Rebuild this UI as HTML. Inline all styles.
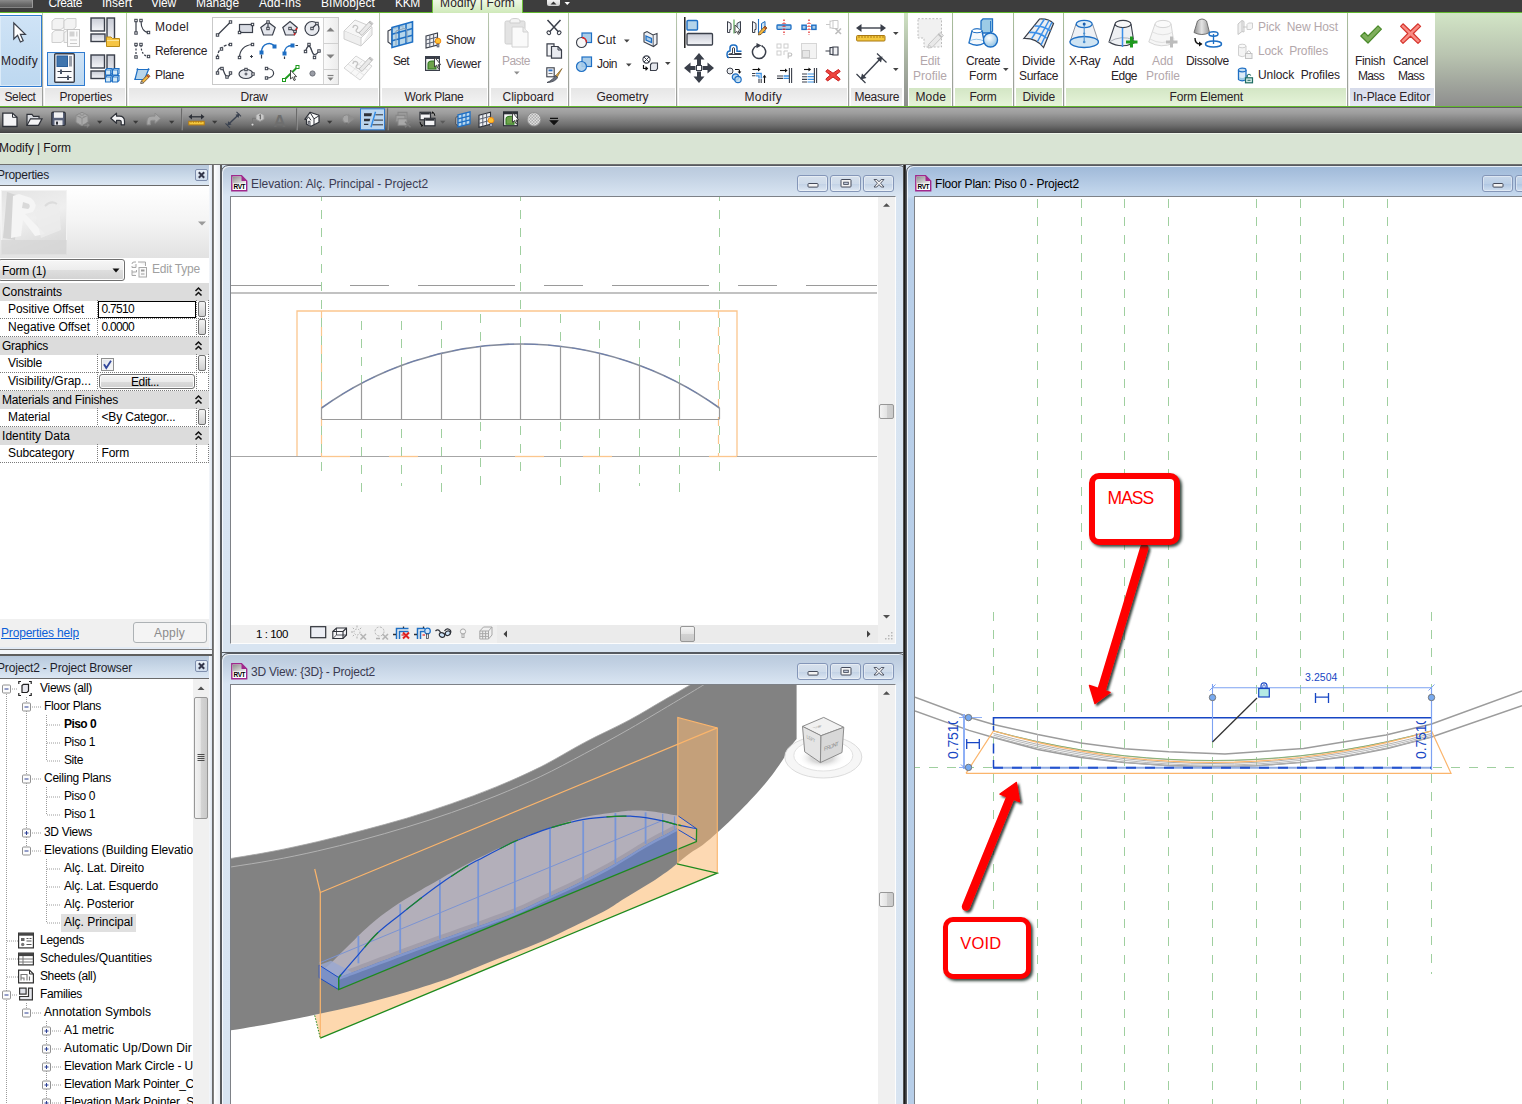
<!DOCTYPE html>
<html><head><meta charset="utf-8"><title>Autodesk Revit - Project2</title><style>
html,body{margin:0;padding:0;background:#fff;}
body{width:1522px;height:1104px;overflow:hidden;position:relative;font-family:"Liberation Sans",sans-serif;}
#app{position:absolute;left:0;top:0;width:1522px;height:1104px;overflow:hidden;}
.t{position:absolute;white-space:pre;}
svg{overflow:visible;display:block;}
</style></head>
<body><div id="app">
<!-- structure -->
<div style="position:absolute;left:0px;top:0px;width:1522px;height:12px;background:#3d3d3d;"></div>
<div style="position:absolute;left:0px;top:0px;width:33px;height:8px;background:linear-gradient(#8b8b8b,#6a6a6a 60%,#5c5c5c);border-right:1px solid #9a9a9a;border-bottom:1px solid #858585;box-sizing:border-box;"></div>
<div style="position:absolute;left:432px;top:0px;width:91px;height:13px;background:linear-gradient(#eef8e4,#cfe9b9);border-left:1px solid #6fc23a;border-right:1px solid #6fc23a;box-sizing:border-box;"></div>
<span class="t" style="left:48.5px;top:-5.37px;font-size:12px;line-height:16px;color:#ffffff;letter-spacing:-0.419px;">Create</span>
<span class="t" style="left:102.0px;top:-5.37px;font-size:12px;line-height:16px;color:#ffffff;">Insert</span>
<span class="t" style="left:151.0px;top:-5.37px;font-size:12px;line-height:16px;color:#ffffff;letter-spacing:-0.198px;">View</span>
<span class="t" style="left:196.0px;top:-5.37px;font-size:12px;line-height:16px;color:#ffffff;letter-spacing:-0.060px;">Manage</span>
<span class="t" style="left:259.0px;top:-5.37px;font-size:12px;line-height:16px;color:#ffffff;letter-spacing:0.092px;">Add-Ins</span>
<span class="t" style="left:321.0px;top:-5.37px;font-size:12px;line-height:16px;color:#ffffff;letter-spacing:0.072px;">BIMobject</span>
<span class="t" style="left:395.0px;top:-5.37px;font-size:12px;line-height:16px;color:#ffffff;letter-spacing:-0.335px;">KKM</span>
<span class="t" style="left:440.0px;top:-5.37px;font-size:12px;line-height:16px;color:#2a2226;letter-spacing:0.145px;">Modify | Form</span>
<div style="position:absolute;left:547px;top:0px;width:13px;height:6px;background:linear-gradient(#f4f4f4,#cfcfcf);border-radius:0 0 2px 2px;"></div>
<svg style="position:absolute;left:547px;top:0px;" width="30" height="10" viewBox="0 0 30 10"><path d="M3.5 4.5 L6.5 1.5 L9.5 4.5Z" fill="#333"/><path d="M17.5 2 L23 2 L20.25 5Z" fill="#fff"/></svg>
<div style="position:absolute;left:0px;top:12px;width:432px;height:1px;background:#62b72f;"></div>
<div style="position:absolute;left:523px;top:12px;width:999px;height:1px;background:#62b72f;"></div>
<div style="position:absolute;left:0px;top:13px;width:1435px;height:93px;background:#ffffff;"></div>
<div style="position:absolute;left:1435px;top:13px;width:87px;height:93px;background:linear-gradient(#d2e5c6,#b9c4b0 45%,#8e8e8e);"></div>
<div style="position:absolute;left:0px;top:106px;width:1522px;height:1px;background:#62b72f;"></div>
<div style="position:absolute;left:0px;top:88px;width:41.5px;height:18px;background:linear-gradient(#e6e6e6,#f4f4f4);"></div>
<div style="position:absolute;left:45px;top:88px;width:80.0px;height:18px;background:linear-gradient(#e6e6e6,#f4f4f4);"></div>
<div style="position:absolute;left:128.5px;top:88px;width:249.5px;height:18px;background:linear-gradient(#e6e6e6,#f4f4f4);"></div>
<div style="position:absolute;left:381.5px;top:88px;width:105.5px;height:18px;background:linear-gradient(#e6e6e6,#f4f4f4);"></div>
<div style="position:absolute;left:490.5px;top:88px;width:76.5px;height:18px;background:linear-gradient(#e6e6e6,#f4f4f4);"></div>
<div style="position:absolute;left:570.5px;top:88px;width:104.5px;height:18px;background:linear-gradient(#e6e6e6,#f4f4f4);"></div>
<div style="position:absolute;left:678.5px;top:88px;width:168.5px;height:18px;background:linear-gradient(#e6e6e6,#f4f4f4);"></div>
<div style="position:absolute;left:850.5px;top:88px;width:51.0px;height:18px;background:linear-gradient(#e6e6e6,#f4f4f4);"></div>
<div style="position:absolute;left:42px;top:13px;width:1px;height:93px;background:linear-gradient(#b8c9ad,#9a9a9a);"></div>
<div style="position:absolute;left:43px;top:13px;width:1px;height:93px;background:linear-gradient(#ffffff,#e8e8e8);"></div>
<div style="position:absolute;left:126px;top:13px;width:1px;height:93px;background:linear-gradient(#b8c9ad,#9a9a9a);"></div>
<div style="position:absolute;left:127px;top:13px;width:1px;height:93px;background:linear-gradient(#ffffff,#e8e8e8);"></div>
<div style="position:absolute;left:379px;top:13px;width:1px;height:93px;background:linear-gradient(#b8c9ad,#9a9a9a);"></div>
<div style="position:absolute;left:380px;top:13px;width:1px;height:93px;background:linear-gradient(#ffffff,#e8e8e8);"></div>
<div style="position:absolute;left:488px;top:13px;width:1px;height:93px;background:linear-gradient(#b8c9ad,#9a9a9a);"></div>
<div style="position:absolute;left:489px;top:13px;width:1px;height:93px;background:linear-gradient(#ffffff,#e8e8e8);"></div>
<div style="position:absolute;left:568px;top:13px;width:1px;height:93px;background:linear-gradient(#b8c9ad,#9a9a9a);"></div>
<div style="position:absolute;left:569px;top:13px;width:1px;height:93px;background:linear-gradient(#ffffff,#e8e8e8);"></div>
<div style="position:absolute;left:676px;top:13px;width:1px;height:93px;background:linear-gradient(#b8c9ad,#9a9a9a);"></div>
<div style="position:absolute;left:677px;top:13px;width:1px;height:93px;background:linear-gradient(#ffffff,#e8e8e8);"></div>
<div style="position:absolute;left:848px;top:13px;width:1px;height:93px;background:linear-gradient(#b8c9ad,#9a9a9a);"></div>
<div style="position:absolute;left:849px;top:13px;width:1px;height:93px;background:linear-gradient(#ffffff,#e8e8e8);"></div>
<div style="position:absolute;left:904px;top:13px;width:4px;height:93px;background:linear-gradient(#cfe2c3,#a9b3a2 50%,#8d8d8d);"></div>
<div style="position:absolute;left:909px;top:88px;width:42.0px;height:18px;background:linear-gradient(#d3e6c5,#e6f4d9);"></div>
<div style="position:absolute;left:954.5px;top:88px;width:57.5px;height:18px;background:linear-gradient(#d3e6c5,#e6f4d9);"></div>
<div style="position:absolute;left:1015.5px;top:88px;width:46.5px;height:18px;background:linear-gradient(#d3e6c5,#e6f4d9);"></div>
<div style="position:absolute;left:1065.5px;top:88px;width:280.5px;height:18px;background:linear-gradient(#d3e6c5,#e6f4d9);"></div>
<div style="position:absolute;left:1349.5px;top:88px;width:84.5px;height:18px;background:linear-gradient(#d6dbea,#e8ebf5);"></div>
<div style="position:absolute;left:952px;top:13px;width:1px;height:93px;background:linear-gradient(#a9bf9b,#9a9a9a);"></div>
<div style="position:absolute;left:953px;top:13px;width:1px;height:93px;background:linear-gradient(#ffffff,#e8e8e8);"></div>
<div style="position:absolute;left:1013px;top:13px;width:1px;height:93px;background:linear-gradient(#a9bf9b,#9a9a9a);"></div>
<div style="position:absolute;left:1014px;top:13px;width:1px;height:93px;background:linear-gradient(#ffffff,#e8e8e8);"></div>
<div style="position:absolute;left:1063px;top:13px;width:1px;height:93px;background:linear-gradient(#a9bf9b,#9a9a9a);"></div>
<div style="position:absolute;left:1064px;top:13px;width:1px;height:93px;background:linear-gradient(#ffffff,#e8e8e8);"></div>
<div style="position:absolute;left:1347px;top:13px;width:1px;height:93px;background:linear-gradient(#a9bf9b,#9a9a9a);"></div>
<div style="position:absolute;left:1348px;top:13px;width:1px;height:93px;background:linear-gradient(#ffffff,#e8e8e8);"></div>
<span class="t" style="left:4.5px;top:88.53px;font-size:12px;line-height:16px;color:#2a2226;letter-spacing:-0.392px;">Select</span>
<span class="t" style="left:59.5px;top:88.53px;font-size:12px;line-height:16px;color:#2a2226;letter-spacing:-0.219px;">Properties</span>
<span class="t" style="left:240.5px;top:88.53px;font-size:12px;line-height:16px;color:#2a2226;letter-spacing:-0.250px;">Draw</span>
<span class="t" style="left:404.5px;top:88.53px;font-size:12px;line-height:16px;color:#2a2226;letter-spacing:-0.280px;">Work Plane</span>
<span class="t" style="left:502.5px;top:88.53px;font-size:12px;line-height:16px;color:#2a2226;letter-spacing:0.016px;">Clipboard</span>
<span class="t" style="left:596.5px;top:88.53px;font-size:12px;line-height:16px;color:#2a2226;letter-spacing:-0.085px;">Geometry</span>
<span class="t" style="left:744.5px;top:88.53px;font-size:12px;line-height:16px;color:#2a2226;letter-spacing:0.360px;">Modify</span>
<span class="t" style="left:854.5px;top:88.53px;font-size:12px;line-height:16px;color:#2a2226;letter-spacing:-0.312px;">Measure</span>
<span class="t" style="left:915.5px;top:88.53px;font-size:12px;line-height:16px;color:#2a2226;letter-spacing:0.121px;">Mode</span>
<span class="t" style="left:969.5px;top:88.53px;font-size:12px;line-height:16px;color:#2a2226;letter-spacing:-0.248px;">Form</span>
<span class="t" style="left:1022.5px;top:88.53px;font-size:12px;line-height:16px;color:#2a2226;letter-spacing:-0.141px;">Divide</span>
<span class="t" style="left:1169.5px;top:88.53px;font-size:12px;line-height:16px;color:#2a2226;letter-spacing:-0.154px;">Form Element</span>
<span class="t" style="left:1353.0px;top:88.53px;font-size:12px;line-height:16px;color:#2a2226;letter-spacing:-0.113px;">In-Place Editor</span>
<div style="position:absolute;left:0px;top:107px;width:1522px;height:26px;background:linear-gradient(#5f5f5f 0,#5f5f5f 1px,#a9a9a9 1px,#9c9c9c 25%,#6e6e6e 70%,#4a4a4a 96%,#3c3c3c);"></div>
<div style="position:absolute;left:0px;top:133px;width:1522px;height:31px;background:#d9e4d4;border-top:1px solid #eef4ea;box-sizing:border-box;"></div>
<span class="t" style="left:-1.0px;top:140.03px;font-size:12px;line-height:16px;color:#1a1418;letter-spacing:-0.086px;">Modify | Form</span>
<div style="position:absolute;left:0px;top:164px;width:1522px;height:1px;background:#6f6f6f;"></div>
<div style="position:absolute;left:0px;top:165px;width:1522px;height:939px;background:#d7e3f0;"></div>
<!-- ribbon -->
<div style="position:absolute;left:0px;top:15px;width:42px;height:72px;background:linear-gradient(#cfe3f6,#bdd8f0);border:1px solid #2f7bd0;border-left:none;box-sizing:border-box;box-shadow:inset 0 0 0 1px #dcebf8;"></div>
<span class="t" style="left:1.0px;top:53.03px;font-size:12px;line-height:16px;color:#2a2226;letter-spacing:0.276px;">Modify</span>
<div style="position:absolute;left:47px;top:52px;width:38px;height:34px;background:linear-gradient(#cfe3f6,#bdd8f0);border:1px solid #2f7bd0;box-sizing:border-box;"></div>
<span class="t" style="left:155.0px;top:19.03px;font-size:12px;line-height:16px;color:#2a2226;letter-spacing:0.264px;">Model</span>
<span class="t" style="left:155.0px;top:43.03px;font-size:12px;line-height:16px;color:#2a2226;letter-spacing:-0.373px;">Reference</span>
<span class="t" style="left:155.0px;top:67.03px;font-size:12px;line-height:16px;color:#2a2226;letter-spacing:-0.338px;">Plane</span>
<div style="position:absolute;left:212px;top:17px;width:127px;height:68px;border:1px solid #c9c9c9;box-sizing:border-box;background:#fff;"></div>
<div style="position:absolute;left:323px;top:18px;width:15px;height:66px;background:linear-gradient(90deg,#fafafa,#ececec);border-left:1px solid #d4d4d4;box-sizing:border-box;"></div>
<div style="position:absolute;left:324px;top:43px;width:14px;height:1px;background:#d0d0d0;"></div>
<div style="position:absolute;left:324px;top:69px;width:14px;height:1px;background:#d0d0d0;"></div>
<span class="t" style="left:393.0px;top:53.03px;font-size:12px;line-height:16px;color:#2a2226;letter-spacing:-0.670px;">Set</span>
<span class="t" style="left:446.0px;top:31.53px;font-size:12px;line-height:16px;color:#2a2226;letter-spacing:-0.254px;">Show</span>
<span class="t" style="left:446.0px;top:55.53px;font-size:12px;line-height:16px;color:#2a2226;letter-spacing:-0.244px;">Viewer</span>
<span class="t" style="left:502.0px;top:53.03px;font-size:12px;line-height:16px;color:#b3a7ab;letter-spacing:-0.537px;">Paste</span>
<span class="t" style="left:597.0px;top:31.53px;font-size:12px;line-height:16px;color:#2a2226;letter-spacing:0.109px;">Cut</span>
<span class="t" style="left:597.0px;top:55.53px;font-size:12px;line-height:16px;color:#2a2226;letter-spacing:-0.503px;">Join</span>
<span class="t" style="left:920.0px;top:53.03px;font-size:12px;line-height:16px;color:#b3a7ab;letter-spacing:-0.169px;">Edit</span>
<span class="t" style="left:913.0px;top:68.03px;font-size:12px;line-height:16px;color:#b3a7ab;">Profile</span>
<span class="t" style="left:966.0px;top:53.03px;font-size:12px;line-height:16px;color:#2a2226;letter-spacing:-0.336px;">Create</span>
<span class="t" style="left:969.0px;top:68.03px;font-size:12px;line-height:16px;color:#2a2226;">Form</span>
<span class="t" style="left:1022.0px;top:53.03px;font-size:12px;line-height:16px;color:#2a2226;letter-spacing:-0.057px;">Divide</span>
<span class="t" style="left:1019.0px;top:68.03px;font-size:12px;line-height:16px;color:#2a2226;letter-spacing:-0.336px;">Surface</span>
<span class="t" style="left:1069.0px;top:53.03px;font-size:12px;line-height:16px;color:#2a2226;letter-spacing:-0.468px;">X-Ray</span>
<span class="t" style="left:1113.0px;top:53.03px;font-size:12px;line-height:16px;color:#2a2226;letter-spacing:-0.117px;">Add</span>
<span class="t" style="left:1111.0px;top:68.03px;font-size:12px;line-height:16px;color:#2a2226;letter-spacing:-0.506px;">Edge</span>
<span class="t" style="left:1152.0px;top:53.03px;font-size:12px;line-height:16px;color:#b3a7ab;letter-spacing:-0.117px;">Add</span>
<span class="t" style="left:1146.0px;top:68.03px;font-size:12px;line-height:16px;color:#b3a7ab;">Profile</span>
<span class="t" style="left:1186.0px;top:53.03px;font-size:12px;line-height:16px;color:#2a2226;letter-spacing:-0.293px;">Dissolve</span>
<span class="t" style="left:1258.0px;top:19.03px;font-size:12px;line-height:16px;color:#b3a7ab;letter-spacing:-0.096px;">Pick  New Host</span>
<span class="t" style="left:1258.0px;top:43.03px;font-size:12px;line-height:16px;color:#b3a7ab;letter-spacing:-0.145px;">Lock  Profiles</span>
<span class="t" style="left:1258.0px;top:67.03px;font-size:12px;line-height:16px;color:#2a2226;letter-spacing:-0.085px;">Unlock  Profiles</span>
<span class="t" style="left:1355.0px;top:53.03px;font-size:12px;line-height:16px;color:#2a2226;letter-spacing:-0.335px;">Finish</span>
<span class="t" style="left:1358.0px;top:68.03px;font-size:12px;line-height:16px;color:#2a2226;letter-spacing:-0.667px;">Mass</span>
<span class="t" style="left:1393.0px;top:53.03px;font-size:12px;line-height:16px;color:#2a2226;letter-spacing:-0.392px;">Cancel</span>
<span class="t" style="left:1398.0px;top:68.03px;font-size:12px;line-height:16px;color:#2a2226;letter-spacing:-0.667px;">Mass</span>
<svg style="position:absolute;left:0px;top:0px;" width="1522" height="107" viewBox="0 0 1522 107"><g transform="translate(13,22)"><path d="M0.8 1 L0.8 17 L4.6 13.4 L7.4 20 L10.2 18.8 L7.4 12.4 L12.4 12.4 Z" fill="#fff" stroke="#3a3f4a" stroke-width="1.2" stroke-linejoin="miter"/></g>
<g transform="translate(51,18)"><g fill="#f3f3f3" stroke="#cfcfcf" stroke-width="1">
<path d="M1 3 L4 0.5 L13 0.5 L13 9 L10 11.5 L1 11.5Z"/><path d="M13 3 L16 0.5 L25 0.5 L25 9 L22 11.5 L13 11.5Z"/>
<path d="M1 15 L4 12.5 L13 12.5 L13 22 L10 24.5 L1 24.5Z"/><path d="M13 15 L16 12.5 L22 12.5 L22 24.5 L13 24.5Z"/></g>
<rect x="16.5" y="11.5" width="12" height="17" fill="#fafafa" stroke="#c4c4c4"/><rect x="18.5" y="13.5" width="5" height="5" fill="#d2d2d2"/><rect x="25" y="13.5" width="1.5" height="5" fill="#d8d8d8"/>
<path d="M19 22 H26 M19 25.5 H26" stroke="#c9c9c9"/></g>
<g transform="translate(90,17)"><defs><linearGradient id="gg" x1="0" y1="0" x2="0" y2="1"><stop offset="0" stop-color="#c9ccd6"/><stop offset="1" stop-color="#f4f5f8"/></linearGradient></defs>
<rect x="1" y="1" width="13.5" height="13" fill="url(#gg)" stroke="#3a3f4a" stroke-width="1.4"/><rect x="17" y="1" width="7.5" height="24" fill="url(#gg)" stroke="#3a3f4a" stroke-width="1.4"/><rect x="1" y="17" width="14" height="7.5" fill="url(#gg)" stroke="#3a3f4a" stroke-width="1.4"/><path d="M16.5 20 H21 L22.5 21.5 H29.5 V29.5 H16.5Z" fill="#f6c544" stroke="#b98a16" stroke-width="1"/><path d="M17 23.5 H29" stroke="#fbe59a" stroke-width="1"/></g>
<g transform="translate(54,53)"><rect x="0.7" y="0.7" width="19.6" height="28.6" rx="1" fill="#fbfbfc" stroke="#3a3f4a" stroke-width="1.4"/>
<rect x="3" y="3" width="10.5" height="10.5" fill="#3f74ad" stroke="#2a5f9c"/><rect x="15" y="3" width="3" height="10.5" fill="#9aa0ab"/>
<path d="M3.5 18.5 H17.5 M3.5 24.5 H17.5" stroke="#3a3f4a" stroke-width="1"/><rect x="6" y="16.5" width="2" height="4.5" fill="#4a5568"/><rect x="13" y="22.5" width="2" height="4.5" fill="#4a5568"/></g>
<g transform="translate(90,54)"><defs><linearGradient id="gg2" x1="0" y1="0" x2="0" y2="1"><stop offset="0" stop-color="#c9ccd6"/><stop offset="1" stop-color="#f4f5f8"/></linearGradient></defs>
<rect x="1" y="1" width="13.5" height="13" fill="url(#gg2)" stroke="#3a3f4a" stroke-width="1.4"/><rect x="17" y="1" width="7.5" height="24" fill="url(#gg2)" stroke="#3a3f4a" stroke-width="1.4"/><rect x="1" y="17" width="14" height="7.5" fill="url(#gg2)" stroke="#3a3f4a" stroke-width="1.4"/><path d="M15.5 16.0 L17.0 14.5 H22.0 V19.5 L20.5 21.0 H15.5Z" fill="#d5ebf7" stroke="#1e6fc4" stroke-width="1.1"/><path d="M15.5 16.0 H20.5 V21.0 M20.5 16.0 L22.0 14.5" fill="none" stroke="#1e6fc4" stroke-width="0.8"/><path d="M22.5 16.0 L24.0 14.5 H29.0 V19.5 L27.5 21.0 H22.5Z" fill="#d5ebf7" stroke="#1e6fc4" stroke-width="1.1"/><path d="M22.5 16.0 H27.5 V21.0 M27.5 16.0 L29.0 14.5" fill="none" stroke="#1e6fc4" stroke-width="0.8"/><path d="M15.5 23.0 L17.0 21.5 H22.0 V26.5 L20.5 28.0 H15.5Z" fill="#d5ebf7" stroke="#1e6fc4" stroke-width="1.1"/><path d="M15.5 23.0 H20.5 V28.0 M20.5 23.0 L22.0 21.5" fill="none" stroke="#1e6fc4" stroke-width="0.8"/><path d="M22.5 23.0 L24.0 21.5 H29.0 V26.5 L27.5 28.0 H22.5Z" fill="#d5ebf7" stroke="#1e6fc4" stroke-width="1.1"/><path d="M22.5 23.0 H27.5 V28.0 M27.5 23.0 L29.0 21.5" fill="none" stroke="#1e6fc4" stroke-width="0.8"/></g>
<g transform="translate(134,19)"><path d="M2 2 V14 M7 2 C7 9 10 13.5 15 13.5" fill="none" stroke="#3a3f4a" stroke-width="1.2"/><rect x="0.8" y="0.30000000000000004" width="2.4" height="2.4" fill="#fff" stroke="#3a3f4a" stroke-width="1"/><rect x="0.8" y="12.8" width="2.4" height="2.4" fill="#fff" stroke="#3a3f4a" stroke-width="1"/><rect x="5.8" y="0.30000000000000004" width="2.4" height="2.4" fill="#fff" stroke="#3a3f4a" stroke-width="1"/><rect x="13.3" y="12.3" width="2.4" height="2.4" fill="#fff" stroke="#3a3f4a" stroke-width="1"/></g>
<g transform="translate(134,43)"><path d="M2 2 V14 M7 2 C7 9 10 13.5 15 13.5" fill="none" stroke="#3a3f4a" stroke-width="1.2" stroke-dasharray="2 1.5"/><rect x="0.8" y="0.30000000000000004" width="2.4" height="2.4" fill="#fff" stroke="#3a3f4a" stroke-width="1"/><rect x="0.8" y="12.8" width="2.4" height="2.4" fill="#fff" stroke="#3a3f4a" stroke-width="1"/><rect x="5.8" y="0.30000000000000004" width="2.4" height="2.4" fill="#fff" stroke="#3a3f4a" stroke-width="1"/><rect x="13.3" y="12.3" width="2.4" height="2.4" fill="#fff" stroke="#3a3f4a" stroke-width="1"/></g>
<g transform="translate(134,67)"><path d="M3.5 2.5 H14.5 L10.5 12.5 H1Z" fill="#b8d5ea" stroke="#1e6fc4" stroke-width="1.2"/><path d="M2 2.5 l1.5-1.5 l1.5 1.5z M13 2.5 l1.5-1.5 l1.5 1.5z M0 12.5 l1.2-1.5 l1 1.5z" fill="#1e6fc4"/><path d="M7.5 14 L14 7.2 L16 9.2 L9.5 15.8 L6.8 16.4Z" fill="#f4b73f" stroke="#6b4a1f" stroke-width="0.8"/><path d="M13 8.2 L15 10.2" stroke="#b0452a" stroke-width="1.4"/><path d="M7.5 14 L9.5 15.8 L6.8 16.4Z" fill="#fff" stroke="#333" stroke-width="0.6"/></g>
<path d="M326.5 31.5 L330.5 27.5 L334.5 31.5Z M326.5 54.5 L334.5 54.5 L330.5 58.5Z M327.5 77.5 L333.5 77.5 L330.5 80.8Z" fill="#808080"/><path d="M327.5 75.5 H333.5" stroke="#808080" stroke-width="1.2"/>
<g transform="translate(216,20)"><path d="M1.5 15 L14.5 2" fill="none" stroke="#3a3f4a" stroke-width="1.2" /><rect x="0.30000000000000004" y="13.8" width="2.4" height="2.4" fill="#fff" stroke="#3a3f4a" stroke-width="1"/><rect x="13.3" y="0.8" width="2.4" height="2.4" fill="#fff" stroke="#3a3f4a" stroke-width="1"/></g>
<g transform="translate(238,20)"><rect x="1.5" y="4.5" width="13" height="8" fill="#d9dce4" stroke="#3a3f4a" stroke-width="1.2"/><rect x="0.30000000000000004" y="11.3" width="2.4" height="2.4" fill="#fff" stroke="#3a3f4a" stroke-width="1"/><rect x="13.3" y="3.3" width="2.4" height="2.4" fill="#fff" stroke="#3a3f4a" stroke-width="1"/></g>
<g transform="translate(260,20)"><path d="M8 2 L15.2 7.5 L12.5 15 H3.5 L0.8 7.5Z" fill="#e4e6ec" stroke="#3a3f4a" stroke-width="1.2" /><path d="M8 2 V8" fill="none" stroke="#3a3f4a" stroke-width="1.2" /><rect x="6.8" y="0.8" width="2.4" height="2.4" fill="#fff" stroke="#3a3f4a" stroke-width="1"/><rect x="6.8" y="7.3" width="2.4" height="2.4" fill="#fff" stroke="#3a3f4a" stroke-width="1"/></g>
<g transform="translate(282,20)"><path d="M8 1.5 L15.2 7.5 L12.5 15 H3.5 L0.8 7.5Z" fill="#e4e6ec" stroke="#3a3f4a" stroke-width="1.2" /><path d="M8 8.5 L13 11.5" fill="none" stroke="#3a3f4a" stroke-width="1.2" /><path d="M14.8 8 L12.2 15" fill="none" stroke="#e02020" stroke-width="1.6" stroke-dasharray="3 1.5"/><rect x="6.8" y="7.3" width="2.4" height="2.4" fill="#fff" stroke="#3a3f4a" stroke-width="1"/><rect x="11.8" y="10.3" width="2.4" height="2.4" fill="#fff" stroke="#3a3f4a" stroke-width="1"/></g>
<g transform="translate(304,20)"><circle cx="8" cy="8.5" r="7" fill="#e8eaef" stroke="#3a3f4a" stroke-width="1.2"/><path d="M8 8.5 L13 3.5" fill="none" stroke="#3a3f4a" stroke-width="1.2" /><rect x="6.8" y="7.3" width="2.4" height="2.4" fill="#fff" stroke="#3a3f4a" stroke-width="1"/><rect x="11.8" y="2.3" width="2.4" height="2.4" fill="#fff" stroke="#3a3f4a" stroke-width="1"/></g>
<g transform="translate(216,42.5)"><path d="M1.5 15 C1.5 8 6 2.5 14.5 2" fill="none" stroke="#3a3f4a" stroke-width="1.2" stroke-dasharray="3 1.5"/><rect x="0.30000000000000004" y="13.8" width="2.4" height="2.4" fill="#fff" stroke="#3a3f4a" stroke-width="1"/><rect x="13.3" y="0.8" width="2.4" height="2.4" fill="#fff" stroke="#3a3f4a" stroke-width="1"/><rect x="4.3" y="5.3" width="2.4" height="2.4" fill="#fff" stroke="#3a3f4a" stroke-width="1"/></g>
<g transform="translate(238,42.5)"><path d="M1.5 15 C1.5 8 6 2.5 14.5 2" fill="none" stroke="#3a3f4a" stroke-width="1.2" /><path d="M12 14 H15 M13.5 12.5 V15.5" fill="none" stroke="#3a3f4a" stroke-width="1" /><rect x="0.30000000000000004" y="13.8" width="2.4" height="2.4" fill="#fff" stroke="#3a3f4a" stroke-width="1"/><rect x="13.3" y="0.8" width="2.4" height="2.4" fill="#fff" stroke="#3a3f4a" stroke-width="1"/></g>
<g transform="translate(260,42.5)"><path d="M1.5 10 C1.5 0 12 -1 14.5 4" fill="none" stroke="#1e6fc4" stroke-width="1.5" /><path d="M1.5 12 V16" fill="none" stroke="#3a3f4a" stroke-width="1.2" /><rect x="0.0" y="8.5" width="3" height="3" fill="#1e6fc4" stroke="#1e6fc4" stroke-width="1"/><rect x="13.0" y="2.5" width="3" height="3" fill="#1e6fc4" stroke="#1e6fc4" stroke-width="1"/></g>
<g transform="translate(282,42.5)"><path d="M2.5 11 C2.5 5 5 3 10.5 3" fill="none" stroke="#1e6fc4" stroke-width="1.3" /><path d="M2.5 14 V16.5 M13.5 3 H16" fill="none" stroke="#3a3f4a" stroke-width="1.2" /><rect x="1.0" y="9.5" width="3" height="3" fill="#1e6fc4" stroke="#1e6fc4" stroke-width="1"/><rect x="9.0" y="1.5" width="3" height="3" fill="#1e6fc4" stroke="#1e6fc4" stroke-width="1"/></g>
<g transform="translate(304,42.5)"><path d="M1.5 9 L5 2.5 L10.5 15 L15 8.5" fill="none" stroke="#9aa0aa" stroke-width="1" /><path d="M1.5 9 C3 3 5.5 2 7 6 C8.5 10 9.5 16 15 8.5" fill="none" stroke="#3a3f4a" stroke-width="1.2" /><rect x="0.30000000000000004" y="7.8" width="2.4" height="2.4" fill="#fff" stroke="#3a3f4a" stroke-width="1"/><rect x="3.8" y="0.8" width="2.4" height="2.4" fill="#fff" stroke="#3a3f4a" stroke-width="1"/><rect x="9.3" y="13.8" width="2.4" height="2.4" fill="#fff" stroke="#3a3f4a" stroke-width="1"/><rect x="13.8" y="7.3" width="2.4" height="2.4" fill="#fff" stroke="#3a3f4a" stroke-width="1"/></g>
<g transform="translate(216,65)"><path d="M1.5 8 C2 2 6 1 8 7 C10 13 13.5 13 14.5 8" fill="none" stroke="#3a3f4a" stroke-width="1.2" /><rect x="0.30000000000000004" y="6.8" width="2.4" height="2.4" fill="#fff" stroke="#3a3f4a" stroke-width="1"/><rect x="4.8" y="2.3" width="2.4" height="2.4" fill="#fff" stroke="#3a3f4a" stroke-width="1"/><rect x="9.8" y="10.8" width="2.4" height="2.4" fill="#fff" stroke="#3a3f4a" stroke-width="1"/><rect x="13.3" y="6.8" width="2.4" height="2.4" fill="#fff" stroke="#3a3f4a" stroke-width="1"/></g>
<g transform="translate(238,65)"><ellipse cx="8" cy="9" rx="7" ry="4.5" fill="#e8eaef" stroke="#3a3f4a" stroke-width="1.2"/><path d="M6.5 9 H9.5 M8 7.5 V10.5" fill="none" stroke="#3a3f4a" stroke-width="1" /><rect x="6.8" y="3.3" width="2.4" height="2.4" fill="#fff" stroke="#3a3f4a" stroke-width="1"/><rect x="13.8" y="7.8" width="2.4" height="2.4" fill="#fff" stroke="#3a3f4a" stroke-width="1"/></g>
<g transform="translate(260,65)"><path d="M6.5 3.5 C16 3.5 16 13 6.5 13" fill="none" stroke="#3a3f4a" stroke-width="1.2" /><rect x="5.3" y="2.3" width="2.4" height="2.4" fill="#fff" stroke="#3a3f4a" stroke-width="1"/><rect x="5.3" y="11.8" width="2.4" height="2.4" fill="#fff" stroke="#3a3f4a" stroke-width="1"/></g>
<g transform="translate(282,65)"><path d="M2 15 L15.5 2" fill="none" stroke="#1e9a1e" stroke-width="1.8" /><rect x="0.5" y="13.5" width="3" height="3" fill="#fff" stroke="#1e9a1e" stroke-width="1"/><rect x="14.0" y="0.5" width="3" height="3" fill="#fff" stroke="#1e9a1e" stroke-width="1"/><path d="M8.5 5 V14 L10.6 12.2 L12 15.5 L13.4 14.9 L12 11.8 L14.6 11.6Z" fill="#fff" stroke="#333" stroke-width="0.9"/></g>
<g transform="translate(304,65)"><circle cx="8.5" cy="8.5" r="2.6" fill="#9a9da6" stroke="#6d7079" stroke-width="1"/></g>
<g transform="translate(343,18)"><path d="M1 13 L12 2 L29 9 L18 20Z" fill="#f6f6f6" stroke="#d0d0d0"/><path d="M1 13 V21 L18 28 V20 M18 28 L29 17 V9" fill="#efefef" stroke="#d0d0d0"/><path d="M10 10 C10 5 17 8 14 11 C11 14 16 16 19 13" fill="none" stroke="#c4c4c4" stroke-width="1.3"/><path d="M16 15 L27 3 L30 5.5 L19 17.5Z" fill="#e9e9e9" stroke="#c2c2c2"/><path d="M26 4 L29 6.5" stroke="#b8b8b8" stroke-width="1.5"/></g>
<g transform="translate(343,54)"><path d="M1 14 L13 2 L29 12 L17 26Z" fill="#f8f8f8" stroke="#d6d6d6"/><path d="M5 10 L21 21 M9 6 L25 16.5 M7 20 L19 7 M12 23 L24 10" stroke="#e0e0e0" stroke-width="0.8" fill="none"/><path d="M10 10 C10 5 17 8 14 11 C11 14 16 16 19 13" fill="none" stroke="#c4c4c4" stroke-width="1.3"/><path d="M16 15 L27 3 L30 5.5 L19 17.5Z" fill="#e9e9e9" stroke="#c2c2c2"/><path d="M26 4 L29 6.5" stroke="#b8b8b8" stroke-width="1.5"/></g>
<g transform="translate(387,21)"><path d="M1 10 L5 8 V24 L1 21Z M5 8 L16 5 V8" fill="#f2f2f2" stroke="#3a3f4a" stroke-width="1.1"/>
<path d="M5 6.5 L25.5 0.8 V21 L5 26.5Z" fill="#a9cfe8" fill-opacity="0.85" stroke="#1e6fc4" stroke-width="1.6"/>
<path d="M5 13.2 L25.5 7.5 M5 19.8 L25.5 14.2 M12 4.6 V24.6 M19 2.6 V22.8" stroke="#1e6fc4" stroke-width="1.5" fill="none"/>
<path d="M9 24 V10 L17 7.5 Q20 7.5 20 10 V21" fill="none" stroke="#8fa3b5" stroke-width="1"/></g>
<g transform="translate(425,32)"><path d="M1 4 L12.5 1 V13 L1 16Z" fill="#eef0f3" stroke="#3a3f4a" stroke-width="1.1"/><path d="M1 8 L12.5 5 M1 12 L12.5 9 M4.8 3 V15 M8.6 2 V14" stroke="#5a6070" stroke-width="1" fill="none"/>
<circle cx="13" cy="9" r="2.8" fill="#ffc233" stroke="#f08a12" stroke-width="1"/><rect x="12" y="12" width="2" height="3" fill="#9aa3b5" stroke="#445" stroke-width="0.6"/></g>
<g transform="translate(425,56)"><rect x="0.6" y="0.6" width="13.8" height="13.8" fill="#f6f6f6" stroke="#3a3f4a" stroke-width="1.2"/><rect x="0.6" y="0.6" width="13.8" height="2.4" fill="#3a3f4a"/>
<path d="M3 13 V8 Q3 5 7 5 H11 V13Z" fill="#6ea24a" stroke="#2e7a1e" stroke-width="1.1"/><path d="M9.5 1 V11 L11.6 9.2 L13 12.5 L14.4 11.9 L13 8.8 L15.6 8.6Z" fill="#fff" stroke="#333" stroke-width="0.9"/></g>
<g transform="translate(504,18)"><rect x="1" y="3" width="20" height="23" rx="1.5" fill="#e3e3e3" stroke="#cfcfcf"/><path d="M6 3 Q6 0.5 11 0.5 Q16 0.5 16 3 V5 H6Z" fill="#f4f4f4" stroke="#cfcfcf"/>
<path d="M8 9 H19 L24 14 V29 H8Z" fill="#fafafa" stroke="#d2d2d2"/><path d="M19 9 V14 H24" fill="#ececec" stroke="#d2d2d2"/></g>
<path d="M514 71.5 H519.6 L516.8 74.5Z" fill="#8c8c8c"/>
<g transform="translate(546,19)"><path d="M1.5 1 L13 13.5 M14.5 1 L3 13.5" stroke="#3a3f4a" stroke-width="1.5" fill="none"/><ellipse cx="2.8" cy="13.8" rx="2" ry="1.6" transform="rotate(45 2.8 13.8)" fill="#fff" stroke="#3a3f4a" stroke-width="1.1"/><ellipse cx="13.2" cy="13.8" rx="2" ry="1.6" transform="rotate(-45 13.2 13.8)" fill="#fff" stroke="#3a3f4a" stroke-width="1.1"/></g>
<g transform="translate(546,43)"><path d="M1 0.8 H8 V13 H1Z" fill="#f4f5f8" stroke="#3a3f4a" stroke-width="1.2"/><path d="M5.5 3.5 H12 L15.5 7 V15.2 H5.5Z" fill="#e9ebf0" stroke="#3a3f4a" stroke-width="1.2"/><path d="M12 3.5 V7 H15.5" fill="none" stroke="#3a3f4a" stroke-width="1"/></g>
<g transform="translate(546,67)"><rect x="0.8" y="0.8" width="7.4" height="9" fill="#f4f5f8" stroke="#3a3f4a" stroke-width="1.1"/><rect x="2.5" y="2.5" width="4" height="1.8" fill="#2b6fc2"/><path d="M2.5 6.5 H6.5" stroke="#555" stroke-width="0.8"/><path d="M16 1.5 L9.5 9 L11 10.5 Z" fill="#e8b04a" stroke="#7a5a22" stroke-width="0.7"/><path d="M9.5 8.5 L11.5 10.5 C10 14 5 15.5 1 15.5 C5 14 7.5 11.5 9.5 8.5Z" fill="#6a6f7a" stroke="#3a3f4a" stroke-width="0.8"/></g>
<g transform="translate(576,32)"><rect x="6" y="1" width="9.5" height="9.5" fill="#a9cdea" stroke="#1e6fc4" stroke-width="1.2"/><circle cx="5.5" cy="10.5" r="5" fill="#f8f8f8" stroke="#3a3f4a" stroke-width="1.1"/><path d="M6 5.5 A5 5 0 0 1 10.5 10.5" fill="none" stroke="#e02020" stroke-width="1.4"/></g>
<g transform="translate(576,56)"><rect x="6" y="1" width="9.5" height="9.5" fill="#a9cdea" stroke="#1e6fc4" stroke-width="1.2"/><circle cx="5.5" cy="10.5" r="5" fill="#a9cdea" fill-opacity="0.9" stroke="#1e6fc4" stroke-width="1.2"/></g>
<path d="M624 39.5 H629.6 L626.8 42.5Z M626 63.5 H631.6 L628.8 66.5Z M665 62 H670.6 L667.8 65Z" fill="#444"/>
<g transform="translate(643,31)"><path d="M1 2 L4 0.5 L10 4 L14 2.5 V13 L10.5 15.5 L1 11Z" fill="#eef0f4" stroke="#3a3f4a" stroke-width="1.1"/><path d="M10.2 4.2 V15" stroke="#3a3f4a" stroke-width="0.8"/><path d="M3 5 L8.5 7.5 V11.5 L3 9Z" fill="#a9cdea" stroke="#1e6fc4" stroke-width="1.3"/></g>
<g transform="translate(642,55)"><circle cx="4.5" cy="4.5" r="3.6" fill="#fff" stroke="#3a3f4a" stroke-width="1.1"/><path d="M2 2 L7 7 M7 2 L2 7" stroke="#3a3f4a" stroke-width="1"/><path d="M1.5 10 V13.5 H5 M3.5 11.8 L5.4 13.5 L3.5 15.2" fill="none" stroke="#111" stroke-width="1.2"/><path d="M8.5 9.5 L10 8 H15.5 V13.5 L14 15.5 H8.5Z" fill="#e6e8ee" stroke="#3a3f4a" stroke-width="1.1"/></g>
<g transform="translate(684,17)"><defs><linearGradient id="gg3" x1="0" y1="0" x2="0" y2="1"><stop offset="0" stop-color="#c9ccd6"/><stop offset="1" stop-color="#f4f5f8"/></linearGradient></defs><path d="M0.8 0 V31" stroke="#111" stroke-width="1.4"/><rect x="3" y="3.5" width="10.5" height="9.5" rx="1" fill="#b4d4ea" stroke="#1e6fc4" stroke-width="1.4"/><rect x="3" y="16.5" width="25.5" height="11.5" rx="1" fill="url(#gg3)" stroke="#3a3f4a" stroke-width="1.3"/></g>
<g transform="translate(684,53)"><path d="M15 0 L20.5 6.5 H17 V12 H13 V6.5 H9.5Z M15 30 L20.5 23.5 H17 V18.5 H13 V23.5 H9.5Z M0 15 L6.5 9.5 V13 H11.5 V17 H6.5 V20.5Z M30 15 L23.5 9.5 V13 H18.5 V17 H23.5 V20.5Z" fill="#3a3f4a"/><rect x="12.5" y="12.5" width="5" height="5" fill="#fff" stroke="#3a3f4a" stroke-width="1"/></g>
<g transform="translate(726,19)"><path d="M1.5 2.5 L5 4.5 V10.5 H3.8 V13.5 H1.5Z" fill="#f2f3f6" stroke="#3a3f4a" stroke-width="1"/><path d="M14.5 2.5 L11 4.5 V10.5 H12.2 V13.5 H14.5Z" fill="#d0e4f2" stroke="#3a3f4a" stroke-width="1"/><path d="M8 0.5 V14.5" stroke="#4aa04a" stroke-width="1.1"/><path d="M9 6 V14 L10.9 12.4 L12.2 15.4 L13.4 14.9 L12.2 12 L14.6 11.8Z" fill="#fff" stroke="#333" stroke-width="0.8"/></g>
<g transform="translate(751,19)"><path d="M1.5 2.5 L5 4.5 V10.5 H3.8 V13.5 H1.5Z" fill="#f2f3f6" stroke="#3a3f4a" stroke-width="1"/><path d="M14 2.5 L10.5 4.5 V10.5 H11.7 V13.5 H14Z" fill="#d0e4f2" stroke="#1e6fc4" stroke-width="1"/><path d="M7.5 0 V14.5" stroke="#1e6fc4" stroke-width="1.1"/><path d="M8 13.5 L14 7 L16 9 L10 15.4 L7.4 16Z" fill="#f4b73f" stroke="#6b4a1f" stroke-width="0.8"/><path d="M13.2 7.9 L15.2 9.9" stroke="#b0452a" stroke-width="1.4"/></g>
<g transform="translate(776,19)"><rect x="1" y="6" width="14" height="4.4" rx="0.8" fill="#a9cdea" stroke="#1e6fc4" stroke-width="1.3"/><path d="M8 0.5 V16" stroke="#e02020" stroke-width="1.3" stroke-dasharray="1.5 1.5"/><path d="M6.4 4 V13 M9.6 4 V13" stroke="#e86060" stroke-width="0.8" stroke-dasharray="1 2"/></g>
<g transform="translate(801,19)"><rect x="1" y="6.2" width="4.2" height="4.2" fill="#a9cdea" stroke="#1e6fc4" stroke-width="1.4"/><rect x="10.8" y="6.2" width="4.2" height="4.2" fill="#a9cdea" stroke="#1e6fc4" stroke-width="1.4"/><path d="M8 0.5 V16" stroke="#e02020" stroke-width="1.3" stroke-dasharray="1.5 1.5"/><path d="M6.4 4 V13 M9.6 4 V13" stroke="#e86060" stroke-width="0.8" stroke-dasharray="1 2"/></g>
<g transform="translate(825,19)"><path d="M1 5.5 H5 M5 1.5 V9.5 M5 2.5 L8 1.5 H13 V9.5 H8 L5 8.5 M8 1.5 V9.5" fill="none" stroke="#c9c9c9" stroke-width="1"/><path d="M10.5 9.5 L16 15 M16 9.5 L10.5 15" stroke="#bdbdbd" stroke-width="1.6"/></g>
<g transform="translate(726,43)"><path d="M1 14.5 H15.5 M2.5 11.5 H15.5" stroke="#3a3f4a" stroke-width="1" fill="none"/><path d="M15.5 8.2 H11 V5 Q11 2 8 2 H7 Q4 2 4 5 V8 Q1 8 1 11.5 Q1 14.5 3 14.5" fill="none" stroke="#1e6fc4" stroke-width="1.5"/><path d="M15.5 10.5 H8.5 V6 Q8.5 4.5 7.5 4.5 Q6.5 4.5 6.5 6 V10.5 H4.5 Q3 10.5 3 11.5" fill="none" stroke="#3a3f4a" stroke-width="1"/></g>
<g transform="translate(751,43)"><path d="M6.2 2.6 A6.6 6.6 0 1 0 10.5 2.8" fill="none" stroke="#3a3f4a" stroke-width="1.5"/><path d="M5.5 0 L10.5 2.6 L5.5 5.2Z" fill="#3a3f4a"/></g>
<g transform="translate(776,43)"><rect x="1" y="1" width="4" height="4" fill="none" stroke="#cdcdcd"/><rect x="8" y="1" width="4" height="4" fill="none" stroke="#cdcdcd"/><rect x="1" y="8" width="4" height="4" fill="none" stroke="#cdcdcd"/><path d="M8 12 V8 H12" fill="none" stroke="#cdcdcd"/><path d="M12.2 15.5 V10 H14 Q15.8 10 15.8 11.6 Q15.8 13.2 14 13.2 H12.2" fill="none" stroke="#c4c4c4" stroke-width="1.2"/></g>
<g transform="translate(801,43)"><rect x="0.5" y="0.5" width="15" height="15" fill="#f3f3f3" stroke="#d6d6d6"/><rect x="1.5" y="7.5" width="7" height="7" fill="#e6e6e6" stroke="#c9c9c9"/></g>
<g transform="translate(825,43)"><path d="M0.5 8 H5 M5 4 V12 M5 5 L8 4 H13 V12 H8 L5 11 M8 4 V12" fill="#f1f2f5" stroke="#3a3f4a" stroke-width="1.1"/></g>
<g transform="translate(726,67)"><circle cx="4" cy="4" r="3" fill="#eceef2" stroke="#3a3f4a" stroke-width="1"/><path d="M9 2.5 H12.5 Q13.5 2.5 13.5 4 V5" fill="none" stroke="#111" stroke-width="1.1"/><path d="M11.6 4.6 L13.5 6.8 L15.4 4.6Z" fill="#111"/><circle cx="9.5" cy="10" r="3.2" fill="#b9d8ee" stroke="#1e6fc4" stroke-width="1.2"/><circle cx="12" cy="12.5" r="3.2" fill="#b9d8ee" fill-opacity="0.8" stroke="#1e6fc4" stroke-width="1.2"/></g>
<g transform="translate(751,67)"><path d="M1.5 2.5 H8" stroke="#111" stroke-width="1.1"/><path d="M7 0.6 L9.6 2.5 L7 4.4Z" fill="#111"/><path d="M1 6.5 H4.5 M1 8.8 H4.5 M8 12 V16 M10.2 12 V16" stroke="#3a3f4a" stroke-width="1.1"/><path d="M5 6.5 H10.2 V11.5 M5 8.8 H8 V11.5" fill="none" stroke="#3b8fe0" stroke-width="1.3"/><path d="M13.5 16 V9.5" stroke="#111" stroke-width="1.1"/><path d="M11.6 10.4 L13.5 7.8 L15.4 10.4Z" fill="#111"/></g>
<g transform="translate(776,67)"><path d="M4 3.5 H10" stroke="#111" stroke-width="1.1"/><path d="M9 1.6 L11.6 3.5 L9 5.4Z" fill="#111"/><path d="M1 9 H7 M1 11.4 H7" stroke="#3a3f4a" stroke-width="1.1"/><path d="M7.5 9 H13 M7.5 11.4 H13" stroke="#3b8fe0" stroke-width="1.3"/><path d="M13.4 1 V16 M15.6 1 V16" stroke="#3a3f4a" stroke-width="1.1"/></g>
<g transform="translate(801,67)"><path d="M3 2.5 H8.5" stroke="#111" stroke-width="1.1"/><path d="M7.5 0.6 L10.1 2.5 L7.5 4.4Z" fill="#111"/><path d="M1 7 H6 M1 9.7 H6 M1 12.4 H6 M1 15 H6" stroke="#3a3f4a" stroke-width="1.1"/><path d="M6.5 7 H13 M6.5 9.7 H13 M6.5 12.4 H13 M6.5 15 H13" stroke="#3b8fe0" stroke-width="1.2"/><path d="M13.4 1 V16 M15.6 1 V16" stroke="#3a3f4a" stroke-width="1.1"/></g>
<g transform="translate(825,67)"><path d="M2.5 2.5 L8 6.2 L13.5 2.5 L15.2 4.5 L10.6 8 L15.2 12 L13.5 14 L8 10 L2.5 14 L0.8 12 L5.4 8 L0.8 4.5Z" fill="#f0443e" stroke="#c81e1e" stroke-width="1" stroke-linejoin="round"/></g>
<g transform="translate(856,23)"><path d="M3 5 H27" stroke="#3a3f4a" stroke-width="1.4"/><path d="M0 5 L5.5 1 V9Z M30 5 L24.5 1 V9Z" fill="#3a3f4a"/><rect x="0.6" y="12.5" width="28.4" height="5.5" rx="1" fill="#f3c73d" stroke="#a97812" stroke-width="1"/><path d="M3 13 v2 M6 13 v2 M9 13 v2 M12 13 v2 M15 13 v2 M18 13 v2 M21 13 v2 M24 13 v2 M27 13 v2" stroke="#a97812" stroke-width="0.9"/></g>
<g transform="translate(856,53)"><path d="M6 25 L25 5" stroke="#3a3f4a" stroke-width="1.4"/><path d="M0.5 21 L9.5 30 M21 0.5 L30.5 9.5" stroke="#3a3f4a" stroke-width="1.2"/><path d="M4.5 26.5 L6 20.5 L10.5 25Z M26.5 3.5 L20.5 5 L25 9.5Z" fill="#3a3f4a"/></g>
<path d="M893 32 H898.6 L895.8 35Z M893 68 H898.6 L895.8 71Z" fill="#444"/>
<g transform="translate(917,18)"><path d="M1 0.7 H24.5 V29 H7 V20 H1Z" fill="#f1f1f1" stroke="#bdbdbd" stroke-dasharray="2 1.6"/><path d="M11.5 26.5 L23 14.5 L26.5 17.5 L15 29.5 L11 30Z" fill="#e9e9e9" stroke="#c6c6c6"/><path d="M21.3 16.2 L24.8 19.3" stroke="#bcbcbc" stroke-width="1.6"/><path d="M11.5 26.5 L15 29.5" stroke="#c9c9c9"/></g>
<g transform="translate(968,18)"><defs><radialGradient id="sph" cx="0.4" cy="0.35" r="0.7"><stop offset="0" stop-color="#ffffff"/><stop offset="1" stop-color="#8dc0e2"/></radialGradient></defs>
<path d="M13 3 L15 0.8 H24.5 V13 L22.5 15 H13Z" fill="#9ccbe6" stroke="#1e6fc4" stroke-width="1.3"/><path d="M22.5 3 V14" stroke="#1e6fc4" stroke-width="0.9"/>
<path d="M4 13 Q9 9 14 13 L16.5 25 Q9 29.5 1 25Z" fill="#f4f8fc" stroke="#1e6fc4" stroke-width="1.4"/><ellipse cx="9" cy="12.8" rx="5" ry="2" fill="#fff" stroke="#1e6fc4" stroke-width="1"/><path d="M1.5 23 Q8 19.5 16 23" fill="none" stroke="#8fc2e6" stroke-width="0.9"/>
<circle cx="22.5" cy="22" r="7" fill="url(#sph)" stroke="#1e6fc4" stroke-width="1.4"/></g>
<path d="M1003 68 H1008.6 L1005.8 71Z" fill="#444"/>
<g transform="translate(1023,18)"><path d="M16.5 1 Q26 0.5 30.5 5.5 L20.5 29.5 Q13 20 0.8 20.5Z" fill="#eceef1" stroke="#3a3f4a" stroke-width="1.2"/>
<path d="M11.5 8 Q20 7.5 27.5 12.8 M6 14.5 Q16 13.5 24 20.5 M21.5 1 L8.5 20.8 M26 2.5 L14.5 23.5 M29 4 L18 27" fill="none" stroke="#3b8fe8" stroke-width="1.5"/></g>
<g transform="translate(1069,19)"><path d="M7 5 L1 23 Q15 32 29.5 23 L23.5 5" fill="#eef1f5" stroke="#8a919e" stroke-width="1"/>
<ellipse cx="15.2" cy="23" rx="14.2" ry="5.5" fill="#cfe4f3" stroke="#1e6fc4" stroke-width="1.4"/><ellipse cx="15.2" cy="5" rx="8" ry="3.6" fill="#dcecf7" stroke="#1e6fc4" stroke-width="1.3"/>
<path d="M15.2 5 V23" stroke="#4a8fd0" stroke-width="1.1"/><circle cx="15.2" cy="5" r="1.5" fill="#1b5fb0"/><circle cx="15.2" cy="14.5" r="1.1" fill="#4a8fd0"/><circle cx="15.2" cy="23" r="1.3" fill="#4a8fd0"/></g>
<g transform="translate(1108,19)"><path d="M7 5 L1 23 Q13 30 26 24 L23 5" fill="#eef0f3" stroke="#3a3f4a" stroke-width="1.1"/><ellipse cx="15" cy="5" rx="8" ry="3.6" fill="#f7f7f8" stroke="#3a3f4a" stroke-width="1.1"/><path d="M1 23 Q13 15.5 26 21" fill="none" stroke="#a5aab3" stroke-width="0.9"/>
<path d="M14.5 8.8 V28" stroke="#3b8fe8" stroke-width="1.5"/><path d="M23.5 17.5 V28.5 M18 23 H29.5" stroke="#1e9a1e" stroke-width="3"/></g>
<g transform="translate(1148,19)"><path d="M7 5 L0.8 23 Q13 30 26 24 L23 5" fill="#f6f6f6" stroke="#d6d6d6" stroke-width="1"/><ellipse cx="15" cy="5" rx="8" ry="3.6" fill="#fafafa" stroke="#d4d4d4"/><path d="M4.5 13 Q15 18.5 25 13 M2 20 Q14 27 26.5 20" fill="none" stroke="#e1e1e1" stroke-width="1"/>
<path d="M23.5 17.5 V28.5 M18 23 H29.5" stroke="#bdbdbd" stroke-width="3"/></g>
<g transform="translate(1193,18)"><defs><linearGradient id="cone" x1="0" y1="0" x2="1" y2="0"><stop offset="0" stop-color="#8f8f8f"/><stop offset="0.5" stop-color="#e4e4e4"/><stop offset="1" stop-color="#9a9a9a"/></linearGradient></defs>
<path d="M4.5 3 Q9 -1 13.5 3 L16.5 14.5 Q9 18.5 1 14.5Z" fill="url(#cone)" stroke="#707070" stroke-width="1"/>
<path d="M2 20 Q2 26 7 26" fill="none" stroke="#111" stroke-width="1.4"/><path d="M6 23.5 L9.5 26 L6 28.5Z" fill="#111"/>
<ellipse cx="20.5" cy="26" rx="8" ry="3" fill="none" stroke="#1e6fc4" stroke-width="1.5"/><ellipse cx="20.5" cy="16" rx="4.5" ry="2.2" fill="none" stroke="#1e6fc4" stroke-width="1.5"/><path d="M20.5 16 V26" stroke="#1e6fc4" stroke-width="1.3"/></g>
<g transform="translate(1237,19)"><path d="M1 5 L5 1.5 V12.5 L1 15.5Z M5 1.5 L7 2.5 V13 L5 12.5" fill="#efefef" stroke="#c6c6c6"/><path d="M6 8 H10" stroke="#c6c6c6"/><path d="M10 5.5 L11.5 4 H15.5 V9 L14 10.5 H10Z" fill="#f5f5f5" stroke="#cfcfcf"/></g>
<g transform="translate(1237,43)"><path d="M1.5 3 V12.5 Q5 15 9 12.5 V3" fill="#f4f4f4" stroke="#d0d0d0"/><ellipse cx="5.2" cy="3" rx="3.8" ry="1.8" fill="#fafafa" stroke="#d0d0d0"/><rect x="8.5" y="10.5" width="6.5" height="5" fill="#f0f0f0" stroke="#c2c2c2"/><path d="M10 10.5 V9 Q11.8 6.5 13.5 9 V10.5" fill="none" stroke="#c2c2c2"/></g>
<g transform="translate(1237,67)"><path d="M1.5 3 V12.5 Q5 15 9 12.5 V3" fill="#dcebf7" stroke="#1e6fc4" stroke-width="1.3"/><ellipse cx="5.2" cy="3" rx="3.8" ry="1.8" fill="#c5dff2" stroke="#1e6fc4" stroke-width="1.2"/><path d="M2.2 10 Q5 12 8.3 10 V12.3 Q5 14 2.2 12.3Z" fill="#9ccbe6"/><rect x="8.5" y="10.8" width="7" height="5" fill="#cfe9e4" stroke="#1f6b62" stroke-width="1.2"/><path d="M10.2 10.5 V8.5 Q12 6 13.8 8.5" fill="none" stroke="#1f6b62" stroke-width="1.2"/><path d="M10.5 13.3 H13.5" stroke="#1f6b62"/></g>
<g transform="translate(1360,25)"><path d="M0.8 11 L4.5 7.3 L8 11 L18 0.8 L21.4 4.2 L8 18Z" fill="#7fae5c" stroke="#4a8a2a" stroke-width="1.2" stroke-linejoin="round"/></g>
<g transform="translate(1400,23)"><path d="M3 0.8 L10.5 8 L18 0.8 L20.6 3.4 L13.3 10.5 L20.6 17.8 L18 20.4 L10.5 13.2 L3 20.4 L0.6 17.8 L7.8 10.5 L0.6 3.4Z" fill="#f98c84" stroke="#d6362e" stroke-width="1.2" stroke-linejoin="round"/></g></svg>
<!-- qat -->
<svg style="position:absolute;left:0px;top:0px;" width="1522" height="134" viewBox="0 0 1522 134"><g transform="translate(0,-0.7)"><g transform="translate(2,113)"><path d="M0.8 0.8 H10.5 L15 5 V14.2 H0.8Z" fill="#f4f4f6" stroke="#2e3138" stroke-width="1.3"/><path d="M10.5 0.8 V5 H15" fill="none" stroke="#2e3138" stroke-width="1"/></g>
<g transform="translate(26,113)"><path d="M1 13 V2 H6 L7.5 4 H13 V6" fill="#d9dbe0" stroke="#2e3138" stroke-width="1.2"/><path d="M1 13 L4.5 6.5 H16 L12.5 13Z" fill="#f4f4f6" stroke="#2e3138" stroke-width="1.2"/></g>
<g transform="translate(51,112)"><rect x="0.8" y="0.8" width="13.4" height="13.4" rx="1.2" fill="#59627a" stroke="#2e3138" stroke-width="1.2"/><rect x="3" y="1" width="9" height="5.5" fill="#f2f2f4"/><rect x="3.5" y="9" width="8" height="5" fill="#e8e8ec"/><rect x="5" y="10.3" width="2" height="3" fill="#2e3138"/></g>
<g transform="translate(74,112)"><path d="M2 4 L8 1 L14 4 V11 L8 14.5 L2 11Z" fill="#a9a9a9" stroke="#8a8a8a"/><path d="M2 4 L8 7 L14 4 M8 7 V14.5" fill="none" stroke="#8e8e8e"/><path d="M5 2.5 L11 5.5 M11 2.5 L5 5.5" stroke="#949494" fill="none"/><path d="M10 13 H13 V11 L16 13.8 L13 16.5 V14.8 H10Z" fill="#8a8a8a" stroke="#777" stroke-width="0.6"/></g>
<path d="M97 121.5 h5.4 l-2.7 3Z" fill="#3a3a3a"/>
<g transform="translate(110,113)"><path d="M0.8 6 L6.5 0.8 V3.8 H9.5 Q14.5 3.8 14.5 9 V12.5 H11.2 V9.5 Q11.2 8 9.5 8 H6.5 V11Z" fill="#f4f4f6" stroke="#2e3138" stroke-width="1.2" stroke-linejoin="round"/></g>
<path d="M133 121.5 h5.4 l-2.7 3Z" fill="#3a3a3a"/>
<g transform="translate(146,113)"><path d="M14.7 6 L9 0.8 V3.8 H6 Q1 3.8 1 9 V12.5 H4.3 V9.5 Q4.3 8 6 8 H9 V11Z" fill="#a8a8a8" stroke="#8c8c8c" stroke-width="1" stroke-linejoin="round"/></g>
<path d="M169 121.5 h5.4 l-2.7 3Z" fill="#3a3a3a"/>
<path d="M181.5 109 V131" stroke="#6a6a6a"/><path d="M182.5 109 V131" stroke="#9a9a9a" stroke-opacity="0.6"/>
<g transform="translate(188,114)"><path d="M2 3.5 H15" stroke="#2e3138" stroke-width="1.3"/><path d="M0.5 3.5 L4 0.8 V6.2Z M16.5 3.5 L13 0.8 V6.2Z" fill="#2e3138"/><rect x="0.8" y="8" width="15.4" height="3.6" fill="#f3c73d" stroke="#b97c10" stroke-width="1"/><path d="M3 8 v1.5 M5.5 8 v1.5 M8 8 v1.5 M10.5 8 v1.5 M13 8 v1.5" stroke="#a97812" stroke-width="0.8"/></g>
<path d="M212 121.5 h5.4 l-2.7 3Z" fill="#3a3a3a"/>
<g transform="translate(225,112)"><path d="M3.5 13 L13.5 3.5" stroke="#3a4250" stroke-width="1.4"/><path d="M0.5 12 L5 16.5 M11.5 0.5 L16 5" stroke="#3a4250" stroke-width="1.1"/><path d="M2.2 14.3 L3.3 10 L6.6 13.2Z M14.6 2.4 L10.4 3.5 L13.5 6.6Z" fill="#3a4250"/></g>
<g transform="translate(250,113)"><path d="M6 2.5 L10 0.5 L14 2.5 V7 L10 9 L6 7Z" fill="#c9c9c9" stroke="#9a9a9a"/><path d="M9.3 3.2 L10.3 2.4 V7" fill="none" stroke="#5a5a5a" stroke-width="1"/><path d="M6 6 H2.5 V11" fill="none" stroke="#777" stroke-width="1"/><circle cx="2.5" cy="12.3" r="1.4" fill="#d8d8d8" stroke="#6a6a6a" stroke-width="0.8"/></g>
<path d="M296.5 109 V131" stroke="#6a6a6a"/><path d="M297.5 109 V131" stroke="#9a9a9a" stroke-opacity="0.6"/>
<g transform="translate(304,112)"><path d="M0.8 8 L6 1 L15 4 L15 11 L7 15 L2.5 13 V8Z" fill="#fafafa" stroke="#2e3138" stroke-width="1.2" stroke-linejoin="round"/><path d="M6 1 L10 7.5 L15 4.5 M10 7.5 V13.5 M2.5 8 L4.5 5.5 L7 9" fill="none" stroke="#2e3138" stroke-width="1"/><path d="M4.2 13.5 V10 H6 V14.3" fill="#c9ccd6" stroke="#2e3138" stroke-width="0.8"/></g>
<path d="M327 121.5 h5.4 l-2.7 3Z" fill="#3a3a3a"/>
<g transform="translate(341,113)"><circle cx="5.5" cy="6.5" r="4" fill="#a6a6a6" stroke="#8a8a8a"/><path d="M7 1.5 L13.5 6.5 L7 11.5Z" fill="#8e8e8e"/><path d="M5.5 10.5 V14" stroke="#6e6e6e"/></g>
<rect x="360.5" y="109.5" width="24" height="21" fill="#bcd6ef" stroke="#2f7bd0"/>
<g transform="translate(363,112)"><path d="M1 2 H9 L8.2 5 H1Z M1 7.5 H7.3 L6.6 10 H1Z M1 12.5 H5.5 L5.2 13.8 H1Z" fill="#2e3138"/><path d="M12.5 0.5 L8 16" stroke="#2f8be8" stroke-width="1.4"/><path d="M12.5 3.5 H20 M11 8.8 H20 M9.5 13.5 H20" stroke="#2e3138" stroke-width="1"/></g>
<path d="M387.5 109 V131" stroke="#6a6a6a"/><path d="M388.5 109 V131" stroke="#9a9a9a" stroke-opacity="0.6"/>
<g transform="translate(395,112)"><rect x="3" y="1" width="9" height="6.5" fill="#9b9b9b" stroke="#858585"/><rect x="1" y="4" width="9" height="6.5" fill="#a3a3a3" stroke="#858585"/><rect x="3" y="7.5" width="9" height="6.5" fill="#a9a9a9" stroke="#858585"/><path d="M10 10.5 L15.5 16 M15.5 10.5 L10 16" stroke="#7d7d7d" stroke-width="1.6"/></g>
<g transform="translate(419,112)"><rect x="1" y="1" width="10.5" height="7.5" fill="#f4f4f6" stroke="#2e3138" stroke-width="1.2"/><rect x="5.5" y="7" width="10.5" height="7.5" fill="#f4f4f6" stroke="#2e3138" stroke-width="1.2"/><rect x="6.2" y="7.6" width="9.2" height="1.8" fill="#2e3138"/><rect x="1.6" y="1.6" width="9.2" height="1.6" fill="#2e3138"/><path d="M13.5 1 Q15.8 1.5 15.8 4.5 M1 10.5 Q1 14 3.5 14.2" fill="none" stroke="#111" stroke-width="1"/><path d="M12.3 2.5 L13.3 0 L15 2Z M2.4 12.8 L4.3 14.4 L2.2 15.6Z" fill="#111"/></g>
<path d="M440 121.5 h5.4 l-2.7 3Z" fill="#5a5a5a"/>
<g transform="translate(455,112)"><path d="M1 6 L3 5 V14.5 L1 13Z" fill="#e8e8e8" stroke="#2e3138" stroke-width="0.8"/><path d="M3 3.5 L15 0.5 V12.5 L3 15.5Z" fill="#b9d8ee" stroke="#1e6fc4" stroke-width="1.3"/><path d="M3 7.5 L15 4.5 M3 11.5 L15 8.5 M7 2.5 V14.5 M11 1.5 V13.5" stroke="#1e6fc4" stroke-width="1.2"/></g>
<g transform="translate(478,112)"><path d="M1 4 L12.5 1 V13 L1 16Z" fill="#eef0f3" stroke="#2e3138" stroke-width="1.1"/><path d="M1 8 L12.5 5 M1 12 L12.5 9 M4.8 3 V15 M8.6 2 V14" stroke="#5a6070" stroke-width="1" fill="none"/><circle cx="13" cy="9" r="2.8" fill="#ffc233" stroke="#f08a12" stroke-width="1"/><rect x="12" y="12" width="2" height="3" fill="#c9d3e5" stroke="#445" stroke-width="0.6"/></g>
<g transform="translate(503,112)"><rect x="0.6" y="0.6" width="13.8" height="13.8" fill="#f6f6f6" stroke="#2e3138" stroke-width="1.2"/><rect x="0.6" y="0.6" width="13.8" height="2.4" fill="#2e3138"/><path d="M3 13 V8 Q3 5 7 5 H11 V13Z" fill="#6ea24a" stroke="#2e7a1e" stroke-width="1.1"/><path d="M9.5 1 V11 L11.6 9.2 L13 12.5 L14.4 11.9 L13 8.8 L15.6 8.6Z" fill="#fff" stroke="#333" stroke-width="0.9"/></g>
<g transform="translate(527,113)"><defs><pattern id="chk" width="3" height="3" patternUnits="userSpaceOnUse"><rect width="3" height="3" fill="#efefef"/><rect width="1.5" height="1.5" fill="#9c9c9c"/><rect x="1.5" y="1.5" width="1.5" height="1.5" fill="#9c9c9c"/></pattern></defs><circle cx="7" cy="7" r="6.8" fill="url(#chk)" stroke="#8a8a8a" stroke-width="0.8"/></g>
<path d="M550 119 H558 M550.5 121.5 H557.5 L554 125.2Z" fill="#111" stroke="#111" stroke-width="1.2"/></g></svg>
<span class="t" style="left:273.5px;top:111.18px;font-size:17px;line-height:21px;color:#6e6e6e;font-weight:bold;">A</span>
<!-- panels -->
<div style="position:absolute;left:0px;top:165px;width:222px;height:939px;background:#eef3f9;"></div>
<div style="position:absolute;left:209px;top:165px;width:3px;height:939px;background:linear-gradient(90deg,#f6f8fb,#dbe3ee);"></div>
<div style="position:absolute;left:212px;top:165px;width:2px;height:939px;background:linear-gradient(90deg,#5e5e5e,#8a8a8a);"></div>
<div style="position:absolute;left:214px;top:165px;width:6px;height:939px;background:linear-gradient(90deg,#ffffff,#e9edf3);"></div>
<div style="position:absolute;left:220px;top:165px;width:2px;height:939px;background:#5b5b5b;"></div>
<div style="position:absolute;left:0px;top:165px;width:209px;height:20px;background:linear-gradient(#b7c8dc,#c9d8e8 50%,#dce7f3);"></div>
<span class="t" style="left:-3.0px;top:167.03px;font-size:12px;line-height:16px;color:#1e1e2a;letter-spacing:-0.269px;">Properties</span>
<div style="position:absolute;left:195px;top:169px;width:13px;height:12px;border:1px solid #7f8fae;border-radius:2px;box-sizing:border-box;background:linear-gradient(#e9f0f8,#cfdcec);"></div>
<svg style="position:absolute;left:195px;top:169px;" width="13" height="12" viewBox="0 0 13 12"><path d="M3.8 3.3 L9.2 8.7 M9.2 3.3 L3.8 8.7" stroke="#33364a" stroke-width="2"/></svg>
<div style="position:absolute;left:0px;top:185px;width:209px;height:1px;background:#6a6a6a;"></div>
<div style="position:absolute;left:0px;top:186px;width:209px;height:433px;background:#ffffff;"></div>
<div style="position:absolute;left:0px;top:186px;width:209px;height:72px;background:linear-gradient(#ffffff,#f4f4f4 50%,#e2e2e2);"></div>
<div style="position:absolute;left:1px;top:190px;width:66px;height:65px;background:linear-gradient(160deg,#e4e4e4,#efefef 45%,#dedede 75%,#d6d6d6);border:1px solid #f3f3f3;box-sizing:border-box;overflow:hidden;"></div>
<svg style="position:absolute;left:1px;top:190px;" width="66" height="65" viewBox="0 0 66 65"><path d="M6 2 L2 48 L14 50 L18 6Z" fill="#d4d4d4"/><path d="M18 4 L30 8 Q38 14 32 22 L24 24 L44 44 L34 46 L22 30 L20 46 L10 48 L12 6Z" fill="#f5f5f5"/><path d="M22 12 L28 14 Q30 17 27 19 L21 18Z" fill="#d9d9d9"/><path d="M34 22 L58 14 L60 40 L40 48Z" fill="#ececec" fill-opacity="0.8"/><path d="M44 16 Q50 10 56 14" fill="none" stroke="#dcdcdc" stroke-width="2"/><path d="M0 50 H66 V65 H0Z" fill="#d5d5d5" fill-opacity="0.7"/></svg>
<svg style="position:absolute;left:196px;top:219px;" width="12" height="8" viewBox="0 0 12 8"><path d="M2 2.5 H10 L6 6.5Z" fill="#9a9a9a"/></svg>
<div style="position:absolute;left:-2px;top:259px;width:127px;height:22px;border:1px solid #707070;border-radius:3px;box-sizing:border-box;background:linear-gradient(#f6f6f6,#ececec 50%,#dedede 52%,#d2d2d2);box-shadow:inset 0 0 0 1px #fcfcfc;"></div>
<span class="t" style="left:2.0px;top:263.03px;font-size:12px;line-height:16px;color:#000;letter-spacing:-0.249px;">Form (1)</span>
<svg style="position:absolute;left:111px;top:266px;" width="10" height="8" viewBox="0 0 10 8"><path d="M1.5 2.5 H8.5 L5 6.5Z" fill="#111"/></svg>
<svg style="position:absolute;left:131px;top:261px;" width="17" height="17" viewBox="0 0 17 17"><g fill="#f4f4f4" stroke="#a8a8a8" stroke-width="1"><path d="M1 3 Q1 1 3 1 H5 M7 1 H14.5 V5 M1 5 V6.5 H5 V3"/><path d="M1 9 V14.5 H5 M1 11 H5.5 V9"/><rect x="8" y="6.5" width="7.5" height="9.5" fill="#fafafa"/></g><rect x="10" y="8.5" width="3.5" height="2" fill="#9a9a9a"/><path d="M10 13 H13.5" stroke="#9a9a9a"/></svg>
<span class="t" style="left:152.0px;top:261.03px;font-size:12px;line-height:16px;color:#a0a0a0;letter-spacing:-0.201px;">Edit Type</span>
<div style="position:absolute;left:0px;top:283px;width:209px;height:18px;background:#dcdcdc;"></div>
<span class="t" style="left:2.0px;top:284.23px;font-size:12px;line-height:16px;color:#000;letter-spacing:-0.063px;">Constraints</span>
<svg style="position:absolute;left:194px;top:286px;" width="9" height="12" viewBox="0 0 9 12"><path d="M1.5 5 L4.5 2 L7.5 5 M1.5 9.5 L4.5 6.5 L7.5 9.5" fill="none" stroke="#111" stroke-width="1.5"/></svg>
<span class="t" style="left:8.0px;top:301.23px;font-size:12px;line-height:16px;color:#000;letter-spacing:-0.076px;">Positive Offset</span>
<span class="t" style="left:101.5px;top:301.23px;font-size:12px;line-height:16px;color:#000;letter-spacing:-0.700px;">0.7510</span>
<div style="position:absolute;left:0px;top:318px;width:209px;height:1px;background:repeating-linear-gradient(90deg,#7a7a7a 0,#7a7a7a 1px,transparent 1px,transparent 2px);"></div>
<div style="position:absolute;left:97px;top:300px;width:1px;height:18px;background:repeating-linear-gradient(#7a7a7a 0,#7a7a7a 1px,transparent 1px,transparent 2px);"></div>
<div style="position:absolute;left:196px;top:300px;width:1px;height:18px;background:repeating-linear-gradient(#7a7a7a 0,#7a7a7a 1px,transparent 1px,transparent 2px);"></div>
<div style="position:absolute;left:208px;top:300px;width:1px;height:18px;background:repeating-linear-gradient(#7a7a7a 0,#7a7a7a 1px,transparent 1px,transparent 2px);"></div>
<div style="position:absolute;left:198px;top:301px;width:8px;height:16px;border:1px solid #707070;border-radius:2px;box-sizing:border-box;background:linear-gradient(#f4f4f4,#e2e2e2 50%,#cfcfcf);"></div>
<span class="t" style="left:8.0px;top:319.23px;font-size:12px;line-height:16px;color:#000;letter-spacing:-0.032px;">Negative Offset</span>
<span class="t" style="left:101.5px;top:319.23px;font-size:12px;line-height:16px;color:#000;letter-spacing:-0.700px;">0.0000</span>
<div style="position:absolute;left:0px;top:336px;width:209px;height:1px;background:repeating-linear-gradient(90deg,#7a7a7a 0,#7a7a7a 1px,transparent 1px,transparent 2px);"></div>
<div style="position:absolute;left:97px;top:318px;width:1px;height:18px;background:repeating-linear-gradient(#7a7a7a 0,#7a7a7a 1px,transparent 1px,transparent 2px);"></div>
<div style="position:absolute;left:196px;top:318px;width:1px;height:18px;background:repeating-linear-gradient(#7a7a7a 0,#7a7a7a 1px,transparent 1px,transparent 2px);"></div>
<div style="position:absolute;left:208px;top:318px;width:1px;height:18px;background:repeating-linear-gradient(#7a7a7a 0,#7a7a7a 1px,transparent 1px,transparent 2px);"></div>
<div style="position:absolute;left:198px;top:319px;width:8px;height:16px;border:1px solid #707070;border-radius:2px;box-sizing:border-box;background:linear-gradient(#f4f4f4,#e2e2e2 50%,#cfcfcf);"></div>
<div style="position:absolute;left:98px;top:301px;width:98px;height:17px;border:1.5px solid #000;box-sizing:border-box;"></div>
<div style="position:absolute;left:0px;top:337px;width:209px;height:18px;background:#dcdcdc;"></div>
<span class="t" style="left:2.0px;top:338.23px;font-size:12px;line-height:16px;color:#000;letter-spacing:-0.252px;">Graphics</span>
<svg style="position:absolute;left:194px;top:340px;" width="9" height="12" viewBox="0 0 9 12"><path d="M1.5 5 L4.5 2 L7.5 5 M1.5 9.5 L4.5 6.5 L7.5 9.5" fill="none" stroke="#111" stroke-width="1.5"/></svg>
<span class="t" style="left:8.0px;top:355.23px;font-size:12px;line-height:16px;color:#000;letter-spacing:-0.162px;">Visible</span>
<div style="position:absolute;left:0px;top:372px;width:209px;height:1px;background:repeating-linear-gradient(90deg,#7a7a7a 0,#7a7a7a 1px,transparent 1px,transparent 2px);"></div>
<div style="position:absolute;left:97px;top:354px;width:1px;height:18px;background:repeating-linear-gradient(#7a7a7a 0,#7a7a7a 1px,transparent 1px,transparent 2px);"></div>
<div style="position:absolute;left:196px;top:354px;width:1px;height:18px;background:repeating-linear-gradient(#7a7a7a 0,#7a7a7a 1px,transparent 1px,transparent 2px);"></div>
<div style="position:absolute;left:208px;top:354px;width:1px;height:18px;background:repeating-linear-gradient(#7a7a7a 0,#7a7a7a 1px,transparent 1px,transparent 2px);"></div>
<div style="position:absolute;left:198px;top:355px;width:8px;height:16px;border:1px solid #707070;border-radius:2px;box-sizing:border-box;background:linear-gradient(#f4f4f4,#e2e2e2 50%,#cfcfcf);"></div>
<div style="position:absolute;left:101px;top:358px;width:13px;height:13px;border:1px solid #8e8f8f;box-sizing:border-box;background:linear-gradient(135deg,#dfe3ea,#f7f8fa);box-shadow:inset 0 0 0 1px #f4f4f4;"></div>
<svg style="position:absolute;left:101px;top:358px;" width="13" height="13" viewBox="0 0 13 13"><path d="M3 6.2 L5.3 10 L10 2.8" fill="none" stroke="#31479c" stroke-width="1.8"/></svg>
<span class="t" style="left:8.0px;top:373.23px;font-size:12px;line-height:16px;color:#000;letter-spacing:-0.008px;">Visibility/Grap...</span>
<div style="position:absolute;left:0px;top:390px;width:209px;height:1px;background:repeating-linear-gradient(90deg,#7a7a7a 0,#7a7a7a 1px,transparent 1px,transparent 2px);"></div>
<div style="position:absolute;left:97px;top:372px;width:1px;height:18px;background:repeating-linear-gradient(#7a7a7a 0,#7a7a7a 1px,transparent 1px,transparent 2px);"></div>
<div style="position:absolute;left:196px;top:372px;width:1px;height:18px;background:repeating-linear-gradient(#7a7a7a 0,#7a7a7a 1px,transparent 1px,transparent 2px);"></div>
<div style="position:absolute;left:208px;top:372px;width:1px;height:18px;background:repeating-linear-gradient(#7a7a7a 0,#7a7a7a 1px,transparent 1px,transparent 2px);"></div>
<div style="position:absolute;left:99px;top:374px;width:96px;height:15px;border:1px solid #707070;border-radius:3px;box-sizing:border-box;background:linear-gradient(#f4f4f4,#ececec 50%,#dcdcdc 52%,#cfcfcf);box-shadow:inset 0 0 0 1px #fcfcfc;"></div>
<span class="t" style="left:131.0px;top:374.03px;font-size:12px;line-height:16px;color:#000;letter-spacing:-0.383px;">Edit...</span>
<div style="position:absolute;left:0px;top:391px;width:209px;height:18px;background:#dcdcdc;"></div>
<span class="t" style="left:2.0px;top:392.23px;font-size:12px;line-height:16px;color:#000;letter-spacing:-0.184px;">Materials and Finishes</span>
<svg style="position:absolute;left:194px;top:394px;" width="9" height="12" viewBox="0 0 9 12"><path d="M1.5 5 L4.5 2 L7.5 5 M1.5 9.5 L4.5 6.5 L7.5 9.5" fill="none" stroke="#111" stroke-width="1.5"/></svg>
<span class="t" style="left:8.0px;top:409.23px;font-size:12px;line-height:16px;color:#000;letter-spacing:-0.085px;">Material</span>
<span class="t" style="left:101.5px;top:409.23px;font-size:12px;line-height:16px;color:#000;letter-spacing:-0.170px;">&lt;By Categor...</span>
<div style="position:absolute;left:0px;top:426px;width:209px;height:1px;background:repeating-linear-gradient(90deg,#7a7a7a 0,#7a7a7a 1px,transparent 1px,transparent 2px);"></div>
<div style="position:absolute;left:97px;top:408px;width:1px;height:18px;background:repeating-linear-gradient(#7a7a7a 0,#7a7a7a 1px,transparent 1px,transparent 2px);"></div>
<div style="position:absolute;left:196px;top:408px;width:1px;height:18px;background:repeating-linear-gradient(#7a7a7a 0,#7a7a7a 1px,transparent 1px,transparent 2px);"></div>
<div style="position:absolute;left:208px;top:408px;width:1px;height:18px;background:repeating-linear-gradient(#7a7a7a 0,#7a7a7a 1px,transparent 1px,transparent 2px);"></div>
<div style="position:absolute;left:198px;top:409px;width:8px;height:16px;border:1px solid #707070;border-radius:2px;box-sizing:border-box;background:linear-gradient(#f4f4f4,#e2e2e2 50%,#cfcfcf);"></div>
<div style="position:absolute;left:0px;top:427px;width:209px;height:18px;background:#dcdcdc;"></div>
<span class="t" style="left:2.0px;top:428.23px;font-size:12px;line-height:16px;color:#000;letter-spacing:0.049px;">Identity Data</span>
<svg style="position:absolute;left:194px;top:430px;" width="9" height="12" viewBox="0 0 9 12"><path d="M1.5 5 L4.5 2 L7.5 5 M1.5 9.5 L4.5 6.5 L7.5 9.5" fill="none" stroke="#111" stroke-width="1.5"/></svg>
<span class="t" style="left:8.0px;top:445.23px;font-size:12px;line-height:16px;color:#000;letter-spacing:-0.125px;">Subcategory</span>
<span class="t" style="left:101.5px;top:445.23px;font-size:12px;line-height:16px;color:#000;letter-spacing:-0.123px;">Form</span>
<div style="position:absolute;left:0px;top:462px;width:209px;height:1px;background:repeating-linear-gradient(90deg,#7a7a7a 0,#7a7a7a 1px,transparent 1px,transparent 2px);"></div>
<div style="position:absolute;left:97px;top:444px;width:1px;height:18px;background:repeating-linear-gradient(#7a7a7a 0,#7a7a7a 1px,transparent 1px,transparent 2px);"></div>
<div style="position:absolute;left:196px;top:444px;width:1px;height:18px;background:repeating-linear-gradient(#7a7a7a 0,#7a7a7a 1px,transparent 1px,transparent 2px);"></div>
<div style="position:absolute;left:208px;top:444px;width:1px;height:18px;background:repeating-linear-gradient(#7a7a7a 0,#7a7a7a 1px,transparent 1px,transparent 2px);"></div>
<div style="position:absolute;left:0px;top:619px;width:209px;height:28px;background:#f0f0f0;"></div>
<span class="t" style="left:1.0px;top:624.53px;font-size:12px;line-height:16px;color:#0b5fd8;letter-spacing:-0.180px;text-decoration:underline;">Properties help</span>
<div style="position:absolute;left:133px;top:622px;width:74px;height:21px;border:1px solid #adb2b5;border-radius:3px;box-sizing:border-box;background:#f4f4f4;"></div>
<span class="t" style="left:154.0px;top:625.03px;font-size:12px;line-height:16px;color:#8b8b8b;letter-spacing:0.197px;">Apply</span>
<div style="position:absolute;left:0px;top:647px;width:209px;height:2px;background:#e3ebf5;"></div>
<div style="position:absolute;left:0px;top:649px;width:212px;height:1px;background:#7b7b7b;"></div>
<div style="position:absolute;left:0px;top:650px;width:212px;height:4px;background:#f3f6fa;"></div>
<div style="position:absolute;left:0px;top:654px;width:212px;height:2px;background:#5e5e5e;"></div>
<div style="position:absolute;left:0px;top:656px;width:209px;height:22px;background:linear-gradient(#b7c8dc,#c9d8e8 50%,#dce7f3);"></div>
<span class="t" style="left:-3.0px;top:660.03px;font-size:12px;line-height:16px;color:#1e1e2a;letter-spacing:-0.168px;">Project2 - Project Browser</span>
<div style="position:absolute;left:195px;top:660px;width:13px;height:12px;border:1px solid #7f8fae;border-radius:2px;box-sizing:border-box;background:linear-gradient(#e9f0f8,#cfdcec);"></div>
<svg style="position:absolute;left:195px;top:660px;" width="13" height="12" viewBox="0 0 13 12"><path d="M3.8 3.3 L9.2 8.7 M9.2 3.3 L3.8 8.7" stroke="#33364a" stroke-width="2"/></svg>
<div style="position:absolute;left:0px;top:678px;width:209px;height:1px;background:#6a6a6a;"></div>
<div style="position:absolute;left:0px;top:679px;width:209px;height:425px;background:#ffffff;"></div>
<span class="t" style="left:40.0px;top:680.23px;font-size:12px;line-height:16px;color:#000;letter-spacing:-0.284px;">Views (all)</span>
<span class="t" style="left:44.0px;top:698.23px;font-size:12px;line-height:16px;color:#000;letter-spacing:-0.335px;">Floor Plans</span>
<span class="t" style="left:64.0px;top:716.23px;font-size:12px;line-height:16px;color:#000;letter-spacing:-0.558px;font-weight:bold;">Piso 0</span>
<span class="t" style="left:64.0px;top:734.23px;font-size:12px;line-height:16px;color:#000;letter-spacing:-0.392px;">Piso 1</span>
<span class="t" style="left:64.0px;top:752.23px;font-size:12px;line-height:16px;color:#000;letter-spacing:-0.419px;">Site</span>
<span class="t" style="left:44.0px;top:770.23px;font-size:12px;line-height:16px;color:#000;letter-spacing:-0.233px;">Ceiling Plans</span>
<span class="t" style="left:64.0px;top:788.23px;font-size:12px;line-height:16px;color:#000;letter-spacing:-0.392px;">Piso 0</span>
<span class="t" style="left:64.0px;top:806.23px;font-size:12px;line-height:16px;color:#000;letter-spacing:-0.392px;">Piso 1</span>
<span class="t" style="left:44.0px;top:824.23px;font-size:12px;line-height:16px;color:#000;letter-spacing:-0.308px;">3D Views</span>
<span class="t" style="left:44.0px;top:842.23px;font-size:12px;line-height:16px;color:#000;letter-spacing:-0.083px;">Elevations (Building Elevatio</span>
<span class="t" style="left:64.0px;top:860.23px;font-size:12px;line-height:16px;color:#000;letter-spacing:-0.080px;">Alç. Lat. Direito</span>
<span class="t" style="left:64.0px;top:878.23px;font-size:12px;line-height:16px;color:#000;letter-spacing:-0.225px;">Alç. Lat. Esquerdo</span>
<span class="t" style="left:64.0px;top:896.23px;font-size:12px;line-height:16px;color:#000;letter-spacing:-0.097px;">Alç. Posterior</span>
<div style="position:absolute;left:61px;top:913.5px;width:75px;height:18px;background:#e0e0e0;"></div>
<span class="t" style="left:64.0px;top:914.23px;font-size:12px;line-height:16px;color:#000;letter-spacing:-0.025px;">Alç. Principal</span>
<span class="t" style="left:40.0px;top:932.23px;font-size:12px;line-height:16px;color:#000;letter-spacing:-0.291px;">Legends</span>
<span class="t" style="left:40.0px;top:950.23px;font-size:12px;line-height:16px;color:#000;letter-spacing:-0.070px;">Schedules/Quantities</span>
<span class="t" style="left:40.0px;top:968.23px;font-size:12px;line-height:16px;color:#000;letter-spacing:-0.391px;">Sheets (all)</span>
<span class="t" style="left:40.0px;top:986.23px;font-size:12px;line-height:16px;color:#000;letter-spacing:-0.334px;">Families</span>
<span class="t" style="left:44.0px;top:1004.23px;font-size:12px;line-height:16px;color:#000;letter-spacing:0.015px;">Annotation Symbols</span>
<span class="t" style="left:64.0px;top:1022.23px;font-size:12px;line-height:16px;color:#000;letter-spacing:-0.075px;">A1 metric</span>
<span class="t" style="left:64.0px;top:1040.23px;font-size:12px;line-height:16px;color:#000;letter-spacing:0.157px;">Automatic Up/Down Dir</span>
<span class="t" style="left:64.0px;top:1058.23px;font-size:12px;line-height:16px;color:#000;letter-spacing:-0.148px;">Elevation Mark Circle - U</span>
<span class="t" style="left:64.0px;top:1076.23px;font-size:12px;line-height:16px;color:#000;letter-spacing:-0.252px;">Elevation Mark Pointer_C</span>
<span class="t" style="left:64.0px;top:1094.23px;font-size:12px;line-height:16px;color:#000;letter-spacing:-0.225px;">Elevation Mark Pointer_S</span>
<svg style="position:absolute;left:0px;top:0px;" width="222" height="1104" viewBox="0 0 222 1104"><path d="M6.5 694 V1104" stroke="#9a9a9a" stroke-dasharray="1 1"/>
<path d="M26.5 697 V850" stroke="#9a9a9a" stroke-dasharray="1 1"/>
<path d="M46.5 715 V760" stroke="#9a9a9a" stroke-dasharray="1 1"/>
<path d="M46.5 787 V814" stroke="#9a9a9a" stroke-dasharray="1 1"/>
<path d="M46.5 859 V922" stroke="#9a9a9a" stroke-dasharray="1 1"/>
<path d="M26.5 1003 V1012" stroke="#9a9a9a" stroke-dasharray="1 1"/>
<path d="M46.5 1021 V1104" stroke="#9a9a9a" stroke-dasharray="1 1"/>
<rect x="2.5" y="685.0" width="8" height="8" rx="1" fill="#fcfcfc" stroke="#919191"/><path d="M4.5 689.0 H8.5" stroke="#2b3f95" stroke-width="1"/>
<path d="M12 689.0 H18" stroke="#9a9a9a" stroke-dasharray="1 1"/>
<g transform="translate(18,680.5)" fill="none" stroke="#222" stroke-width="1.2"><path d="M3 1 H0.8 V3.5 M11 1 H13.2 V3.5 M3 15 H0.8 V12.5 M11 15 H13.2 V12.5"/><path d="M4 5 L5.5 3.8 H10.5 V10.5 L9 12 H4Z" fill="#e9e9ef"/></g>
<rect x="22.5" y="703.0" width="8" height="8" rx="1" fill="#fcfcfc" stroke="#919191"/><path d="M24.5 707.0 H28.5" stroke="#2b3f95" stroke-width="1"/>
<path d="M32 707.0 H41" stroke="#9a9a9a" stroke-dasharray="1 1"/>
<path d="M47 725.0 H61" stroke="#9a9a9a" stroke-dasharray="1 1"/>
<path d="M47 743.0 H61" stroke="#9a9a9a" stroke-dasharray="1 1"/>
<path d="M47 761.0 H61" stroke="#9a9a9a" stroke-dasharray="1 1"/>
<rect x="22.5" y="775.0" width="8" height="8" rx="1" fill="#fcfcfc" stroke="#919191"/><path d="M24.5 779.0 H28.5" stroke="#2b3f95" stroke-width="1"/>
<path d="M32 779.0 H41" stroke="#9a9a9a" stroke-dasharray="1 1"/>
<path d="M47 797.0 H61" stroke="#9a9a9a" stroke-dasharray="1 1"/>
<path d="M47 815.0 H61" stroke="#9a9a9a" stroke-dasharray="1 1"/>
<rect x="22.5" y="829.0" width="8" height="8" rx="1" fill="#fcfcfc" stroke="#919191"/><path d="M24.5 833.0 H28.5" stroke="#2b3f95" stroke-width="1"/><path d="M26.5 831.0 V835.0" stroke="#2b3f95" stroke-width="1"/>
<path d="M32 833.0 H41" stroke="#9a9a9a" stroke-dasharray="1 1"/>
<rect x="22.5" y="847.0" width="8" height="8" rx="1" fill="#fcfcfc" stroke="#919191"/><path d="M24.5 851.0 H28.5" stroke="#2b3f95" stroke-width="1"/>
<path d="M32 851.0 H41" stroke="#9a9a9a" stroke-dasharray="1 1"/>
<path d="M47 869.0 H61" stroke="#9a9a9a" stroke-dasharray="1 1"/>
<path d="M47 887.0 H61" stroke="#9a9a9a" stroke-dasharray="1 1"/>
<path d="M47 905.0 H61" stroke="#9a9a9a" stroke-dasharray="1 1"/>
<path d="M47 923.0 H61" stroke="#9a9a9a" stroke-dasharray="1 1"/>
<path d="M7 941.0 H18" stroke="#9a9a9a" stroke-dasharray="1 1"/>
<g transform="translate(18,932.5)"><rect x="0.6" y="0.6" width="14.8" height="14.8" fill="#fff" stroke="#333" stroke-width="1.2"/><rect x="0.6" y="0.6" width="14.8" height="2.6" fill="#444"/><rect x="3" y="5.5" width="3.5" height="3" fill="#666"/><circle cx="4.7" cy="12" r="1.7" fill="#777"/><path d="M8.5 6 H10.5 M11.5 6 H13.5 M8.5 8.5 H13.5 M8.5 12 H13.5" stroke="#555" stroke-width="1.2"/></g>
<path d="M7 959.0 H18" stroke="#9a9a9a" stroke-dasharray="1 1"/>
<g transform="translate(18,952.5)"><rect x="0.6" y="0.6" width="14.8" height="11.8" fill="#fff" stroke="#333" stroke-width="1.2"/><rect x="0.6" y="0.6" width="14.8" height="3" fill="#444"/><path d="M1 6.5 H15 M1 9.5 H15 M5 3.5 V12" stroke="#777" stroke-width="1"/></g>
<path d="M7 977.0 H18" stroke="#9a9a9a" stroke-dasharray="1 1"/>
<g transform="translate(18,969.5)"><path d="M0.6 0.6 H11.5 L15.4 4.5 V13.4 H0.6Z" fill="#fff" stroke="#333" stroke-width="1.2"/><path d="M11.5 0.6 V4.5 H15.4" fill="none" stroke="#333"/><path d="M3 11 V5 H9 V11 M3 8.5 H6 V11 M11.5 7 V11" fill="none" stroke="#777" stroke-width="1.1"/></g>
<rect x="2.5" y="991.0" width="8" height="8" rx="1" fill="#fcfcfc" stroke="#919191"/><path d="M4.5 995.0 H8.5" stroke="#2b3f95" stroke-width="1"/>
<path d="M12 995.0 H18" stroke="#9a9a9a" stroke-dasharray="1 1"/>
<g transform="translate(19,987.5)"><rect x="0.6" y="0.6" width="6.5" height="6" fill="#dfe2ea" stroke="#333" stroke-width="1.2"/><path d="M9.5 0.6 H13.4 V12.4 H0.6 V9 H9.5Z" fill="#e6e8ee" stroke="#333" stroke-width="1.2"/></g>
<rect x="22.5" y="1009.0" width="8" height="8" rx="1" fill="#fcfcfc" stroke="#919191"/><path d="M24.5 1013.0 H28.5" stroke="#2b3f95" stroke-width="1"/>
<path d="M32 1013.0 H41" stroke="#9a9a9a" stroke-dasharray="1 1"/>
<rect x="42.5" y="1027.0" width="8" height="8" rx="1" fill="#fcfcfc" stroke="#919191"/><path d="M44.5 1031.0 H48.5" stroke="#2b3f95" stroke-width="1"/><path d="M46.5 1029.0 V1033.0" stroke="#2b3f95" stroke-width="1"/>
<path d="M52 1031.0 H61" stroke="#9a9a9a" stroke-dasharray="1 1"/>
<rect x="42.5" y="1045.0" width="8" height="8" rx="1" fill="#fcfcfc" stroke="#919191"/><path d="M44.5 1049.0 H48.5" stroke="#2b3f95" stroke-width="1"/><path d="M46.5 1047.0 V1051.0" stroke="#2b3f95" stroke-width="1"/>
<path d="M52 1049.0 H61" stroke="#9a9a9a" stroke-dasharray="1 1"/>
<rect x="42.5" y="1063.0" width="8" height="8" rx="1" fill="#fcfcfc" stroke="#919191"/><path d="M44.5 1067.0 H48.5" stroke="#2b3f95" stroke-width="1"/><path d="M46.5 1065.0 V1069.0" stroke="#2b3f95" stroke-width="1"/>
<path d="M52 1067.0 H61" stroke="#9a9a9a" stroke-dasharray="1 1"/>
<rect x="42.5" y="1081.0" width="8" height="8" rx="1" fill="#fcfcfc" stroke="#919191"/><path d="M44.5 1085.0 H48.5" stroke="#2b3f95" stroke-width="1"/><path d="M46.5 1083.0 V1087.0" stroke="#2b3f95" stroke-width="1"/>
<path d="M52 1085.0 H61" stroke="#9a9a9a" stroke-dasharray="1 1"/>
<rect x="42.5" y="1099.0" width="8" height="8" rx="1" fill="#fcfcfc" stroke="#919191"/><path d="M44.5 1103.0 H48.5" stroke="#2b3f95" stroke-width="1"/><path d="M46.5 1101.0 V1105.0" stroke="#2b3f95" stroke-width="1"/>
<path d="M52 1103.0 H61" stroke="#9a9a9a" stroke-dasharray="1 1"/></svg>
<div style="position:absolute;left:193px;top:679px;width:16px;height:425px;background:#f0f0f0;"></div>
<svg style="position:absolute;left:193px;top:679px;" width="16" height="18" viewBox="0 0 16 18"><path d="M4.5 11 L8 7.5 L11.5 11Z" fill="#505050"/></svg>
<div style="position:absolute;left:194px;top:697px;width:14px;height:122px;border:1px solid #979797;border-radius:2px;box-sizing:border-box;background:linear-gradient(90deg,#f2f2f2,#e8e8e8 45%,#d4d4d4 50%,#cacaca);"></div>
<svg style="position:absolute;left:194px;top:752px;" width="14" height="12" viewBox="0 0 14 12"><path d="M3.5 2.5 H10.5 M3.5 4.5 H10.5 M3.5 6.5 H10.5 M3.5 8.5 H10.5" stroke="#4c4c4c" stroke-width="1"/></svg>
<!-- views -->
<div style="position:absolute;left:221px;top:165px;width:685px;height:488px;background:linear-gradient(#b9c9dc 0,#c2d1e3 10px,#d9e5f2 30px,#d8e4f1);border:1px solid #565a60;border-radius:7px 7px 0 0;box-sizing:border-box;box-shadow:inset 1px 1px 0 rgba(255,255,255,.75);"></div>
<svg style="position:absolute;left:231px;top:175px;" width="17" height="17" viewBox="0 0 17 17"><defs><linearGradient id="rv2210165" x1="0" y1="0" x2="1" y2="1"><stop offset="0" stop-color="#8c8c8c"/><stop offset="1" stop-color="#f2f2f2"/></linearGradient></defs><path d="M0.8 0.8 H10.5 L15.7 6 V15.7 H0.8Z" fill="#fff" stroke="#a0288c" stroke-width="1.4"/><path d="M1.5 1.5 H10 L15 6.5 V8.5 H1.5Z" fill="url(#rv2210165)"/><path d="M10.5 0.8 L15.7 6 H10.5Z" fill="#a0288c"/></svg>
<span class="t" style="left:233.6px;top:182.20px;font-size:6.5px;line-height:10.5px;color:#000;letter-spacing:-0.494px;font-weight:bold;font-family:"Liberation Mono","Liberation Sans",monospace;">RVT</span>
<span class="t" style="left:251.0px;top:176.03px;font-size:12px;line-height:16px;color:#3b3b52;letter-spacing:-0.067px;">Elevation: Alç. Principal - Project2</span>
<div style="position:absolute;left:797px;top:175px;width:31px;height:17px;border:1px solid #8496b8;border-radius:3px;box-sizing:border-box;background:linear-gradient(rgba(255,255,255,.35),rgba(255,255,255,.08) 50%,rgba(120,150,200,.12) 52%,rgba(255,255,255,.25));box-shadow:inset 0 0 0 1px rgba(255,255,255,.4);"></div>
<svg style="position:absolute;left:797px;top:175px;" width="31" height="17" viewBox="0 0 31 17"><rect x="11" y="8.5" width="10" height="3.6" rx="0.8" fill="#f4f4f4" stroke="#444a5a" stroke-width="1"/></svg>
<div style="position:absolute;left:830px;top:175px;width:31px;height:17px;border:1px solid #8496b8;border-radius:3px;box-sizing:border-box;background:linear-gradient(rgba(255,255,255,.35),rgba(255,255,255,.08) 50%,rgba(120,150,200,.12) 52%,rgba(255,255,255,.25));box-shadow:inset 0 0 0 1px rgba(255,255,255,.4);"></div>
<svg style="position:absolute;left:830px;top:175px;" width="31" height="17" viewBox="0 0 31 17"><rect x="11" y="4.5" width="10" height="7.5" rx="0.8" fill="#f4f4f4" stroke="#444a5a" stroke-width="1"/><rect x="13.7" y="7.2" width="4.6" height="2.2" fill="#c9d3e6" stroke="#444a5a" stroke-width="0.9"/></svg>
<div style="position:absolute;left:863px;top:175px;width:31px;height:17px;border:1px solid #8496b8;border-radius:3px;box-sizing:border-box;background:linear-gradient(rgba(255,255,255,.35),rgba(255,255,255,.08) 50%,rgba(120,150,200,.12) 52%,rgba(255,255,255,.25));box-shadow:inset 0 0 0 1px rgba(255,255,255,.4);"></div>
<svg style="position:absolute;left:863px;top:175px;" width="31" height="17" viewBox="0 0 31 17"><path d="M11 4.5 H13.8 L16 6.8 L18.2 4.5 H21 L17.6 8.2 L21 12 H18.2 L16 9.6 L13.8 12 H11 L14.4 8.2Z" fill="#f4f4f4" stroke="#444a5a" stroke-width="0.9"/></svg>
<div style="position:absolute;left:229.5px;top:195.5px;width:666.5px;height:448.5px;border:1.5px solid #7d8187;border-right-color:#fdfdfd;border-bottom-color:#fdfdfd;box-sizing:border-box;background:#fff;"></div>
<div style="position:absolute;left:221px;top:653px;width:685px;height:459px;background:linear-gradient(#b9c9dc 0,#c2d1e3 10px,#d9e5f2 30px,#d8e4f1);border:1px solid #565a60;border-radius:7px 7px 0 0;box-sizing:border-box;box-shadow:inset 1px 1px 0 rgba(255,255,255,.75);"></div>
<svg style="position:absolute;left:231px;top:663px;" width="17" height="17" viewBox="0 0 17 17"><defs><linearGradient id="rv2210653" x1="0" y1="0" x2="1" y2="1"><stop offset="0" stop-color="#8c8c8c"/><stop offset="1" stop-color="#f2f2f2"/></linearGradient></defs><path d="M0.8 0.8 H10.5 L15.7 6 V15.7 H0.8Z" fill="#fff" stroke="#a0288c" stroke-width="1.4"/><path d="M1.5 1.5 H10 L15 6.5 V8.5 H1.5Z" fill="url(#rv2210653)"/><path d="M10.5 0.8 L15.7 6 H10.5Z" fill="#a0288c"/></svg>
<span class="t" style="left:233.6px;top:670.20px;font-size:6.5px;line-height:10.5px;color:#000;letter-spacing:-0.494px;font-weight:bold;font-family:"Liberation Mono","Liberation Sans",monospace;">RVT</span>
<span class="t" style="left:251.0px;top:664.03px;font-size:12px;line-height:16px;color:#3b3b52;letter-spacing:-0.216px;">3D View: {3D} - Project2</span>
<div style="position:absolute;left:797px;top:663px;width:31px;height:17px;border:1px solid #8496b8;border-radius:3px;box-sizing:border-box;background:linear-gradient(rgba(255,255,255,.35),rgba(255,255,255,.08) 50%,rgba(120,150,200,.12) 52%,rgba(255,255,255,.25));box-shadow:inset 0 0 0 1px rgba(255,255,255,.4);"></div>
<svg style="position:absolute;left:797px;top:663px;" width="31" height="17" viewBox="0 0 31 17"><rect x="11" y="8.5" width="10" height="3.6" rx="0.8" fill="#f4f4f4" stroke="#444a5a" stroke-width="1"/></svg>
<div style="position:absolute;left:830px;top:663px;width:31px;height:17px;border:1px solid #8496b8;border-radius:3px;box-sizing:border-box;background:linear-gradient(rgba(255,255,255,.35),rgba(255,255,255,.08) 50%,rgba(120,150,200,.12) 52%,rgba(255,255,255,.25));box-shadow:inset 0 0 0 1px rgba(255,255,255,.4);"></div>
<svg style="position:absolute;left:830px;top:663px;" width="31" height="17" viewBox="0 0 31 17"><rect x="11" y="4.5" width="10" height="7.5" rx="0.8" fill="#f4f4f4" stroke="#444a5a" stroke-width="1"/><rect x="13.7" y="7.2" width="4.6" height="2.2" fill="#c9d3e6" stroke="#444a5a" stroke-width="0.9"/></svg>
<div style="position:absolute;left:863px;top:663px;width:31px;height:17px;border:1px solid #8496b8;border-radius:3px;box-sizing:border-box;background:linear-gradient(rgba(255,255,255,.35),rgba(255,255,255,.08) 50%,rgba(120,150,200,.12) 52%,rgba(255,255,255,.25));box-shadow:inset 0 0 0 1px rgba(255,255,255,.4);"></div>
<svg style="position:absolute;left:863px;top:663px;" width="31" height="17" viewBox="0 0 31 17"><path d="M11 4.5 H13.8 L16 6.8 L18.2 4.5 H21 L17.6 8.2 L21 12 H18.2 L16 9.6 L13.8 12 H11 L14.4 8.2Z" fill="#f4f4f4" stroke="#444a5a" stroke-width="0.9"/></svg>
<div style="position:absolute;left:229.5px;top:683.5px;width:666.5px;height:434.5px;border:1.5px solid #7d8187;border-right-color:#fdfdfd;border-bottom-color:#fdfdfd;box-sizing:border-box;background:#fff;"></div>
<div style="position:absolute;left:903px;top:165px;width:3px;height:939px;background:linear-gradient(90deg,#6a6a6a,#1c1c1c 50%,#4a4a4a);"></div>
<div style="position:absolute;left:906px;top:165px;width:630px;height:947px;background:linear-gradient(#9fb9d8 0,#a9c1de 8px,#c6d9ee 30px,#b9cfe9 34px,#b7cee8);border:1px solid #565a60;border-radius:7px 7px 0 0;box-sizing:border-box;box-shadow:inset 1px 1px 0 rgba(255,255,255,.75);"></div>
<svg style="position:absolute;left:915px;top:175px;" width="17" height="17" viewBox="0 0 17 17"><defs><linearGradient id="rv9060165" x1="0" y1="0" x2="1" y2="1"><stop offset="0" stop-color="#8c8c8c"/><stop offset="1" stop-color="#f2f2f2"/></linearGradient></defs><path d="M0.8 0.8 H10.5 L15.7 6 V15.7 H0.8Z" fill="#fff" stroke="#a0288c" stroke-width="1.4"/><path d="M1.5 1.5 H10 L15 6.5 V8.5 H1.5Z" fill="url(#rv9060165)"/><path d="M10.5 0.8 L15.7 6 H10.5Z" fill="#a0288c"/></svg>
<span class="t" style="left:917.6px;top:182.20px;font-size:6.5px;line-height:10.5px;color:#000;letter-spacing:-0.494px;font-weight:bold;font-family:"Liberation Mono","Liberation Sans",monospace;">RVT</span>
<span class="t" style="left:935.0px;top:176.03px;font-size:12px;line-height:16px;color:#000;letter-spacing:-0.186px;">Floor Plan: Piso 0 - Project2</span>
<div style="position:absolute;left:1482px;top:175px;width:31px;height:17px;border:1px solid #8496b8;border-radius:3px;box-sizing:border-box;background:linear-gradient(rgba(255,255,255,.35),rgba(255,255,255,.08) 50%,rgba(120,150,200,.12) 52%,rgba(255,255,255,.25));box-shadow:inset 0 0 0 1px rgba(255,255,255,.4);"></div>
<svg style="position:absolute;left:1482px;top:175px;" width="31" height="17" viewBox="0 0 31 17"><rect x="11" y="8.5" width="10" height="3.6" rx="0.8" fill="#f4f4f4" stroke="#444a5a" stroke-width="1"/></svg>
<div style="position:absolute;left:1515px;top:175px;width:31px;height:17px;border:1px solid #8496b8;border-radius:3px;box-sizing:border-box;background:linear-gradient(rgba(255,255,255,.35),rgba(255,255,255,.08) 50%,rgba(120,150,200,.12) 52%,rgba(255,255,255,.25));box-shadow:inset 0 0 0 1px rgba(255,255,255,.4);"></div>
<svg style="position:absolute;left:1515px;top:175px;" width="31" height="17" viewBox="0 0 31 17"><rect x="11" y="4.5" width="10" height="7.5" rx="0.8" fill="#f4f4f4" stroke="#444a5a" stroke-width="1"/><rect x="13.7" y="7.2" width="4.6" height="2.2" fill="#c9d3e6" stroke="#444a5a" stroke-width="0.9"/></svg>
<div style="position:absolute;left:913.5px;top:195.5px;width:617.5px;height:922.5px;border:1.5px solid #7d8187;border-right-color:#fdfdfd;border-bottom-color:#fdfdfd;box-sizing:border-box;background:#fff;"></div>
<div style="position:absolute;left:878px;top:197px;width:17px;height:428px;background:#f0f0f0;"></div>
<svg style="position:absolute;left:878px;top:197px;" width="17" height="17" viewBox="0 0 17 17"><path d="M5 9.8 L8.5 6.3 L12 9.8Z" fill="#505050"/></svg>
<svg style="position:absolute;left:878px;top:608px;" width="17" height="17" viewBox="0 0 17 17"><path d="M5 7 L8.5 10.5 L12 7Z" fill="#505050"/></svg>
<div style="position:absolute;left:879px;top:404px;width:15px;height:15px;border:1px solid #979797;border-radius:2px;box-sizing:border-box;background:linear-gradient(90deg,#f4f4f4,#e4e4e4 50%,#d2d2d2 52%,#cacaca);"></div>
<div style="position:absolute;left:231px;top:625px;width:664px;height:18px;background:#f0f0f0;"></div>
<span class="t" style="left:256.0px;top:627.45px;font-size:11.5px;line-height:15.5px;color:#000;letter-spacing:-0.452px;">1 : 100</span>
<div style="position:absolute;left:497px;top:625px;width:381px;height:18px;background:#ebebeb;"></div>
<svg style="position:absolute;left:497px;top:625px;" width="400" height="18" viewBox="0 0 400 18"><path d="M6.5 9 L10 5.5 V12.5Z" fill="#404040"/><path d="M373.5 9 L370 5.5 V12.5Z" fill="#404040"/><g fill="#b8b8b8"><rect x="394" y="13" width="1.5" height="1.5"/><rect x="391" y="13" width="1.5" height="1.5"/><rect x="388" y="13" width="1.5" height="1.5"/><rect x="394" y="10" width="1.5" height="1.5"/><rect x="391" y="10" width="1.5" height="1.5"/><rect x="394" y="7" width="1.5" height="1.5"/></g></svg>
<div style="position:absolute;left:680px;top:626px;width:15px;height:16px;border:1px solid #979797;border-radius:2px;box-sizing:border-box;background:linear-gradient(#f4f4f4,#e4e4e4 50%,#d2d2d2 52%,#cacaca);"></div>
<svg style="position:absolute;left:0px;top:0px;" width="900" height="650" viewBox="0 0 900 650"><rect x="310.7" y="626.7" width="15" height="11" fill="#eceef4" stroke="#2e3138" stroke-width="1.2"/>
<g transform="translate(332,627)" fill="#f6f6f8" stroke="#2e3138" stroke-width="1.1"><path d="M0.8 4.5 L4.5 1 H14.5 V8 L11 11.5 H0.8Z"/><path d="M0.8 4.5 H11 V11.5 M11 4.5 L14.5 1" fill="none"/><path d="M4.5 1 V8 H14.5 M4.5 8 L0.8 11.5" fill="none" stroke-width="0.8"/></g>
<g transform="translate(351,625)" stroke="#b0b0b0" fill="none"><circle cx="6" cy="7" r="3" stroke-dasharray="1.5 1.5"/><path d="M6 0.5 V2.5 M6 11.5 V13.5 M0 7 H2 M1.8 2.8 L3 4 M10.2 2.8 L9 4 M1.8 11.2 L3 10" /><path d="M9.5 9 L15 14.5 M15 9 L9.5 14.5" stroke="#b4b4b4" stroke-width="1.6"/></g>
<g transform="translate(374,626)" stroke="#b0b0b0" fill="none"><circle cx="5.5" cy="5.5" r="4.5" stroke-dasharray="2 1.5"/><path d="M2 12.5 H6" stroke-width="1.5"/><path d="M8.5 8 L14 13.5 M14 8 L8.5 13.5" stroke="#b4b4b4" stroke-width="1.6"/></g>
<g transform="translate(393,626)"><path d="M3.5 13 V2.5 H15.5 M6.5 13 V5.5 H15.5" fill="none" stroke="#1e6fc4" stroke-width="1.5"/><path d="M0 8.5 H3 M10.5 0.5 V2" stroke="#2e3138" stroke-width="1.3"/><path d="M8.5 9 H11" stroke="#e02020" stroke-width="1.2"/><path d="M10 6.5 L16 12.5 M16 6.5 L10 12.5" stroke="#e02020" stroke-width="2"/></g>
<g transform="translate(414,626)"><path d="M3.5 13 V2.5 H11 M6.5 13 V5.5 H10.5" fill="none" stroke="#1e6fc4" stroke-width="1.5"/><path d="M0 8.5 H3 M9.5 0.5 V2" stroke="#2e3138" stroke-width="1.3"/><path d="M8.5 9 H11" stroke="#e02020" stroke-width="1.2"/><circle cx="13.5" cy="5" r="2.8" fill="#cfe4f8" stroke="#1e6fc4" stroke-width="1.2"/><rect x="12.5" y="8" width="2" height="4.5" fill="#dfe6f2" stroke="#2e3138" stroke-width="0.7"/></g>
<g transform="translate(435,627)" fill="none" stroke="#2e3138" stroke-width="1.2"><path d="M0.5 4 Q3 1.5 5 4.5 Q6 9 9.5 7 M9.5 4 Q12 0 15.5 3.5 Q16.5 5.5 14.5 7"/><ellipse cx="7" cy="8" rx="2.8" ry="2.2" fill="#cfe4f8" transform="rotate(20 7 8)"/><ellipse cx="12.8" cy="6.2" rx="2.6" ry="2.2" fill="#cfe4f8" transform="rotate(-25 12.8 6.2)"/></g>
<g transform="translate(460,628)" fill="#f4f4f4" stroke="#a8a8a8"><circle cx="3" cy="3.5" r="2.6"/><rect x="2" y="6" width="2" height="3.5"/></g>
<g transform="translate(479,626)" fill="none" stroke="#a8a8a8"><path d="M0.8 5 L4.5 1 H13 V9 L9.5 13 H0.8Z M0.8 5 H9.5 V13 M9.5 5 L13 1 M3.7 5 V13 M6.6 5 V13 M0.8 7.7 H9.5 M0.8 10.4 H9.5"/></g></svg>
<div style="position:absolute;left:878px;top:685px;width:17px;height:515px;background:#f0f0f0;"></div>
<svg style="position:absolute;left:878px;top:685px;" width="17" height="17" viewBox="0 0 17 17"><path d="M5 9.8 L8.5 6.3 L12 9.8Z" fill="#505050"/></svg>
<div style="position:absolute;left:879px;top:892px;width:15px;height:15px;border:1px solid #979797;border-radius:2px;box-sizing:border-box;background:linear-gradient(90deg,#f4f4f4,#e4e4e4 50%,#d2d2d2 52%,#cacaca);"></div>
<svg style="position:absolute;left:0px;top:0px;" width="1522" height="1104" viewBox="0 0 1522 1104"><defs><clipPath id="c1"><rect x="231" y="197" width="647" height="428"/></clipPath><clipPath id="c2"><rect x="231" y="685" width="647" height="419"/></clipPath><clipPath id="c3"><rect x="915" y="197" width="607" height="907"/></clipPath></defs><g clip-path="url(#c1)"><path d="M231 285.5 H321" stroke="#9a9a9a"/>
<path d="M350 285.5 H389" stroke="#9a9a9a"/>
<path d="M418 285.5 H515" stroke="#9a9a9a"/>
<path d="M544 285.5 H583" stroke="#9a9a9a"/>
<path d="M612 285.5 H709" stroke="#9a9a9a"/>
<path d="M738 285.5 H777" stroke="#9a9a9a"/>
<path d="M806 285.5 H877" stroke="#9a9a9a"/>
<path d="M231 293 H877" stroke="#c2c2c2" stroke-width="2"/>
<path d="M231 456.5 H877" stroke="#a6a6a6" stroke-width="1.2"/>
<path d="M297 456 V311 H737 V456" fill="none" stroke="#fbc68e" stroke-width="1.3"/>
<path d="M321 456.5 H350" stroke="#fbc68e" stroke-width="1.3"/>
<path d="M389 456.5 H418" stroke="#fbc68e" stroke-width="1.3"/>
<path d="M515 456.5 H544" stroke="#fbc68e" stroke-width="1.3"/>
<path d="M583 456.5 H612" stroke="#fbc68e" stroke-width="1.3"/>
<path d="M709 456.5 H737" stroke="#fbc68e" stroke-width="1.3"/>
<path d="M321.5 197 V476" stroke="#9fcf9f" stroke-width="1" stroke-dasharray="9 9" stroke-dashoffset="5"/>
<path d="M361.5 319 V493" stroke="#9fcf9f" stroke-width="1" stroke-dasharray="9 9" stroke-dashoffset="16"/>
<path d="M401.5 319 V486" stroke="#9fcf9f" stroke-width="1" stroke-dasharray="9 9" stroke-dashoffset="16"/>
<path d="M441.5 319 V493" stroke="#9fcf9f" stroke-width="1" stroke-dasharray="9 9" stroke-dashoffset="16"/>
<path d="M480.5 312 V486" stroke="#9fcf9f" stroke-width="1" stroke-dasharray="9 9" stroke-dashoffset="16"/>
<path d="M520.5 197 V476" stroke="#9fcf9f" stroke-width="1" stroke-dasharray="9 9" stroke-dashoffset="5"/>
<path d="M560.5 312 V486" stroke="#9fcf9f" stroke-width="1" stroke-dasharray="9 9" stroke-dashoffset="16"/>
<path d="M599.5 319 V493" stroke="#9fcf9f" stroke-width="1" stroke-dasharray="9 9" stroke-dashoffset="16"/>
<path d="M639.5 319 V486" stroke="#9fcf9f" stroke-width="1" stroke-dasharray="9 9" stroke-dashoffset="16"/>
<path d="M679.5 319 V493" stroke="#9fcf9f" stroke-width="1" stroke-dasharray="9 9" stroke-dashoffset="16"/>
<path d="M719.5 197 V476" stroke="#9fcf9f" stroke-width="1" stroke-dasharray="9 9" stroke-dashoffset="5"/>
<path d="M321.5 311 V456" stroke="#fbc68e" stroke-width="1.2" stroke-dasharray="9 9" stroke-dashoffset="2"/>
<path d="M718.5 311 V456" stroke="#fbc68e" stroke-width="1.2" stroke-dasharray="9 9" stroke-dashoffset="2"/>
<path d="M321.5 408 A341.4 341.4 0 0 1 719.5 408" fill="none" stroke="#858c9c" stroke-width="1.7"/>
<path d="M321.5 408 A341.4 341.4 0 0 1 719.5 408" fill="none" stroke="#5b74b8" stroke-width="0.6" stroke-dasharray="14 10"/>
<path d="M321.5 408.0 V419" stroke="#9a9a9a" stroke-width="1.2"/>
<path d="M361.5 383.3 V419" stroke="#9a9a9a" stroke-width="1.2"/>
<path d="M401.5 365.4 V419" stroke="#9a9a9a" stroke-width="1.2"/>
<path d="M441.5 353.3 V419" stroke="#9a9a9a" stroke-width="1.2"/>
<path d="M480.5 346.4 V419" stroke="#9a9a9a" stroke-width="1.2"/>
<path d="M520.5 344.0 V419" stroke="#9a9a9a" stroke-width="1.2"/>
<path d="M560.5 346.4 V419" stroke="#9a9a9a" stroke-width="1.2"/>
<path d="M599.5 353.3 V419" stroke="#9a9a9a" stroke-width="1.2"/>
<path d="M639.5 365.4 V419" stroke="#9a9a9a" stroke-width="1.2"/>
<path d="M679.5 383.3 V419" stroke="#9a9a9a" stroke-width="1.2"/>
<path d="M719.5 408.0 V419" stroke="#9a9a9a" stroke-width="1.2"/>
<path d="M321.5 419.5 H719.5" stroke="#9a9a9a" stroke-width="1.2"/></g><g clip-path="url(#c2)"><polygon points="314.7,1015.4 320.3,1038.2 717.2,873.1 677.0,863.8" fill="#fdd8ae" stroke="none" stroke-width="1" />
<path d="M200.0 863.0 C205.2 862.2 219.3 860.4 231.4 858.4 C243.5 856.4 258.4 854.1 272.7 851.3 C287.0 848.5 302.5 845.2 317.4 841.7 C332.3 838.2 347.1 834.4 362.0 830.5 C376.9 826.6 391.8 822.7 406.7 818.2 C421.6 813.7 436.5 808.9 451.4 803.7 C466.3 798.5 481.2 793.0 496.1 786.9 C511.0 780.8 526.0 774.2 540.8 766.8 C555.6 759.4 569.9 750.2 584.7 742.4 C599.5 734.6 616.2 727.1 629.4 720.0 C642.6 712.9 653.9 705.8 664.0 700.0 C674.1 694.2 684.0 688.5 690.0 685.0 C696.0 681.5 698.3 680.0 700.0 679.0 L796.6 679 L796.6 739 L796.6 739.0 C795.8 740.1 793.6 742.2 791.5 745.4 C789.4 748.6 787.1 753.1 783.9 758.0 C780.7 762.9 776.3 769.4 772.5 774.5 C768.7 779.6 765.2 783.6 761.0 788.5 C756.8 793.4 752.0 798.6 747.1 803.7 C742.2 808.8 736.8 814.2 731.9 819.0 C727.0 823.8 722.6 828.0 717.7 832.3 C712.8 836.6 707.3 841.5 702.7 845.0 C698.1 848.5 694.3 850.1 690.0 853.2 C685.7 856.3 680.5 860.9 677.0 863.7 C673.5 866.5 673.1 867.1 669.2 870.0 C665.3 872.9 658.6 877.6 653.4 881.0 C648.1 884.4 642.9 887.3 637.7 890.5 C632.5 893.7 627.3 896.7 622.0 900.0 C616.7 903.3 613.9 905.9 606.0 910.2 C598.1 914.5 585.1 920.9 574.6 926.0 C564.1 931.1 553.5 936.4 543.0 941.0 C532.5 945.6 522.0 949.3 511.5 953.5 C501.0 957.7 490.0 962.1 480.0 966.1 C470.0 970.1 463.6 973.2 451.4 977.5 C439.2 981.8 421.6 987.5 406.7 992.0 C391.8 996.5 377.3 1000.4 362.0 1004.2 C346.7 1008.0 329.9 1011.5 315.0 1014.7 C300.1 1017.9 286.7 1020.6 272.7 1023.2 C258.7 1025.8 243.1 1028.3 231.0 1030.3 C218.9 1032.3 205.2 1034.2 200.0 1035.0Z" fill="#828282"/>
<path d="M200.0 872.0 C205.2 871.1 219.3 868.9 231.4 866.9 C243.5 864.9 258.4 862.9 272.7 860.2 C287.0 857.6 302.5 854.4 317.4 851.0 C332.3 847.6 347.1 843.9 362.0 839.9 C376.9 835.9 391.8 831.6 406.7 827.1 C421.6 822.6 436.5 817.8 451.4 812.6 C466.3 807.4 481.1 801.9 496.0 795.9 C510.9 789.9 526.0 783.4 540.8 776.4 C555.6 769.4 569.9 761.5 584.7 753.6 C599.5 745.7 613.8 737.9 629.4 729.0 C645.0 720.1 665.9 707.5 678.5 700.0 C691.1 692.5 699.4 687.5 705.0 684.0 C710.6 680.5 710.8 679.8 712.0 679.0" fill="none" stroke="#b2b2b2" stroke-width="1"/>
<path d="M200.0 863.0 C205.2 862.2 219.3 860.4 231.4 858.4 C243.5 856.4 258.4 854.1 272.7 851.3 C287.0 848.5 302.5 845.2 317.4 841.7 C332.3 838.2 347.1 834.4 362.0 830.5 C376.9 826.6 391.8 822.7 406.7 818.2 C421.6 813.7 436.5 808.9 451.4 803.7 C466.3 798.5 481.2 793.0 496.1 786.9 C511.0 780.8 526.0 774.2 540.8 766.8 C555.6 759.4 569.9 750.2 584.7 742.4 C599.5 734.6 616.2 727.1 629.4 720.0 C642.6 712.9 653.9 705.8 664.0 700.0 C674.1 694.2 684.0 688.5 690.0 685.0 C696.0 681.5 698.3 680.0 700.0 679.0" fill="none" stroke="#a2a2a2" stroke-width="0.8"/>
<path d="M319.2 972.0 C321.0 970.7 325.6 968.0 330.0 964.0 C334.4 960.0 339.2 954.7 345.8 948.3 C352.4 941.9 361.5 932.2 369.4 925.4 C377.3 918.6 384.9 912.9 393.0 907.3 C401.1 901.6 410.4 896.2 418.3 891.5 C426.2 886.8 431.4 883.9 440.4 878.9 C449.3 873.9 459.6 867.9 472.0 861.6 C484.4 855.3 501.8 846.6 514.8 841.0 C527.8 835.4 538.4 831.9 549.7 828.0 C561.0 824.1 571.7 820.2 582.6 817.6 C593.5 815.0 606.6 813.5 615.4 812.3 C624.1 811.1 628.5 810.5 635.1 810.4 C641.7 810.3 647.7 810.8 654.8 811.7 C661.9 812.6 674.0 815.0 677.8 815.6 L696.6 828.8 L696.4 841.5 L677.8 849.2 L677.8 828.1 L677.8 828.1 C672.4 831.0 656.0 839.3 645.6 845.2 C635.2 851.1 625.8 857.7 615.4 863.6 C605.0 869.5 594.1 875.2 583.2 880.7 C572.3 886.2 561.5 891.1 550.0 896.5 C538.5 901.9 526.5 907.8 514.5 912.8 C502.5 917.8 490.6 921.7 478.2 926.2 C465.8 930.7 453.5 934.9 440.4 939.6 C427.3 944.3 416.3 948.3 399.4 954.6 C382.4 960.9 348.8 973.7 338.7 977.5 L319.2 965.1Z" fill="#b3afba"/>
<path d="M338.7 977.5 C348.8 973.7 382.4 960.9 399.4 954.6 C416.3 948.3 427.3 944.3 440.4 939.6 C453.5 934.9 465.8 930.7 478.2 926.2 C490.6 921.7 502.5 917.8 514.5 912.8 C526.5 907.8 538.5 901.9 550.0 896.5 C561.5 891.1 572.3 886.2 583.2 880.7 C594.1 875.2 605.0 869.5 615.4 863.6 C625.8 857.7 635.2 851.1 645.6 845.2 C656.0 839.3 672.4 831.0 677.8 828.1 L677.8 823.6 C672.4 826.5 656.0 834.8 645.6 840.7 C635.2 846.6 625.8 853.2 615.4 859.1 C605.0 865.0 594.1 870.7 583.2 876.2 C572.3 881.7 561.5 886.6 550.0 892.0 C538.5 897.4 526.5 903.3 514.5 908.3 C502.5 913.2 490.6 917.2 478.2 921.7 C465.8 926.2 453.5 930.4 440.4 935.1 C427.3 939.8 416.3 943.8 399.4 950.1 C382.4 956.4 348.8 969.2 338.7 973.0Z" fill="#a29eab"/>
<path d="M338.7 977.5 C348.8 973.7 382.4 960.9 399.4 954.6 C416.3 948.3 427.3 944.3 440.4 939.6 C453.5 934.9 465.8 930.7 478.2 926.2 C490.6 921.7 502.5 917.8 514.5 912.8 C526.5 907.8 538.5 901.9 550.0 896.5 C561.5 891.1 572.3 886.2 583.2 880.7 C594.1 875.2 605.0 869.5 615.4 863.6 C625.8 857.7 635.2 851.1 645.6 845.2 C656.0 839.3 672.4 831.0 677.8 828.1 L677.8 849.2 L338.7 989.6Z" fill="#6a7fb2"/>
<path d="M338.7 977.5 C348.8 973.7 382.4 960.9 399.4 954.6 C416.3 948.3 427.3 944.3 440.4 939.6 C453.5 934.9 465.8 930.7 478.2 926.2 C490.6 921.7 502.5 917.8 514.5 912.8 C526.5 907.8 538.5 901.9 550.0 896.5 C561.5 891.1 572.3 886.2 583.2 880.7 C594.1 875.2 605.0 869.5 615.4 863.6 C625.8 857.7 635.2 851.1 645.6 845.2 C656.0 839.3 672.4 831.0 677.8 828.1 L677.8 830.7 C672.4 833.6 656.0 841.9 645.6 847.8 C635.2 853.7 625.8 860.3 615.4 866.2 C605.0 872.1 594.1 877.8 583.2 883.3 C572.3 888.8 561.5 893.8 550.0 899.1 C538.5 904.5 526.5 910.4 514.5 915.4 C502.5 920.4 490.6 924.3 478.2 928.8 C465.8 933.3 453.5 937.5 440.4 942.2 C427.3 946.9 416.3 950.9 399.4 957.2 C382.4 963.5 348.8 976.3 338.7 980.1Z" fill="#8297cc"/>
<polygon points="319.2,965.1 338.7,977.5 338.7,989.6 319.2,977.8" fill="#7c91c6" stroke="none" stroke-width="1" />
<polygon points="319.2,965.1 338.7,977.5 352.0,972.3 331.0,960.8" fill="#98a8d2" stroke="none" stroke-width="1" fill-opacity="0.8"/>
<polygon points="677.8,717.4 717.3,727.9 717.3,873.1 677.8,864.0" fill="#fbb974" stroke="none" stroke-width="1" fill-opacity="0.55"/>
<path d="M358.4 936 V963.3" stroke="#7795d8" stroke-width="1.8"/>
<path d="M400.2 904.2 V953" stroke="#7795d8" stroke-width="1.8"/>
<path d="M439.9 879.7 V938.8" stroke="#7795d8" stroke-width="1.8"/>
<path d="M478.2 860 V925.4" stroke="#7795d8" stroke-width="1.8"/>
<path d="M514.8 841 V912" stroke="#7795d8" stroke-width="1.8"/>
<path d="M550 829 V896.5" stroke="#7795d8" stroke-width="1.8"/>
<path d="M583.2 820.9 V880.7" stroke="#7795d8" stroke-width="1.8"/>
<path d="M615.4 813 V863" stroke="#7795d8" stroke-width="1.8"/>
<path d="M645.6 812.3 V843.9" stroke="#7795d8" stroke-width="1.8"/>
<path d="M662.7 813.7 V835" stroke="#7795d8" stroke-width="1.2"/>
<path d="M674.5 816.3 V829" stroke="#7795d8" stroke-width="1.2"/>
<polyline points="319.2,963.0 661.4,820.9" fill="none" stroke="#7b93d2" stroke-width="1" />
<path d="M338.7 977.5 C342.0 973.7 352.0 962.0 358.4 954.6 C364.8 947.2 370.5 939.9 377.3 933.3 C384.1 926.7 392.6 920.7 399.4 915.2 C406.2 909.7 411.5 905.5 418.3 900.2 C425.1 895.0 432.5 889.2 440.4 883.7 C448.3 878.2 459.3 871.1 465.6 867.1 C471.9 863.1 470.5 864.0 478.2 860.0 C485.9 856.0 503.1 846.9 511.7 842.8 C520.3 838.7 523.7 837.8 530.0 835.3 C536.3 832.8 540.9 830.7 549.7 828.1 C558.5 825.5 571.7 821.6 582.6 819.6 C593.5 817.6 607.1 816.8 615.4 816.3 C623.7 815.8 627.5 816.1 632.5 816.3 C637.5 816.5 640.6 816.8 645.6 817.6 C650.6 818.4 657.3 819.7 662.7 820.9 C668.1 822.1 672.1 823.5 677.8 824.8 C683.4 826.1 693.5 828.1 696.6 828.8" fill="none" stroke="#1a4cc8" stroke-width="1.2"/>
<path d="M338.7 977.5 C342.0 973.7 352.0 962.0 358.4 954.6 C364.8 947.2 370.5 939.9 377.3 933.3 C384.1 926.7 392.6 920.7 399.4 915.2 C406.2 909.7 411.5 905.5 418.3 900.2 C425.1 895.0 432.5 889.2 440.4 883.7 C448.3 878.2 459.3 871.1 465.6 867.1 C471.9 863.1 470.5 864.0 478.2 860.0 C485.9 856.0 503.1 846.9 511.7 842.8 C520.3 838.7 523.7 837.8 530.0 835.3 C536.3 832.8 540.9 830.7 549.7 828.1 C558.5 825.5 571.7 821.6 582.6 819.6 C593.5 817.6 607.1 816.8 615.4 816.3 C623.7 815.8 627.5 816.1 632.5 816.3 C637.5 816.5 640.6 816.8 645.6 817.6 C650.6 818.4 657.3 819.7 662.7 820.9 C668.1 822.1 672.1 823.5 677.8 824.8 C683.4 826.1 693.5 828.1 696.6 828.8" fill="none" stroke="#1e8a1e" stroke-width="1.2" stroke-dasharray="20 36" stroke-dashoffset="-40"/>
<polyline points="319.2,965.1 338.7,977.5 338.7,989.6 319.2,977.8 319.2,965.1" fill="none" stroke="#1a4cc8" stroke-width="1" />
<polyline points="677.8,815.6 696.6,828.8" fill="none" stroke="#1a4cc8" stroke-width="1" />
<polyline points="677.8,829.4 696.6,840.6" fill="none" stroke="#1a4cc8" stroke-width="1" />
<polyline points="338.7,977.5 338.7,989.6 696.4,841.5 696.6,828.8" fill="none" stroke="#1e8a1e" stroke-width="1.3" />
<polyline points="677.8,864.0 677.8,717.4 717.3,727.9 717.3,873.1" fill="none" stroke="#fbb56c" stroke-width="1.1" />
<polyline points="717.2,727.9 320.3,892.5 314.7,869.0" fill="none" stroke="#fbb56c" stroke-width="1.2" />
<polyline points="320.3,892.5 320.3,1038.2" fill="none" stroke="#fbb56c" stroke-width="1.2" />
<polyline points="677.0,863.8 717.2,873.1 320.3,1038.2" fill="none" stroke="#1e8a1e" stroke-width="1.3" />
<polyline points="314.7,1015.4 320.3,1038.2" fill="none" stroke="#1e8a1e" stroke-width="1" stroke-dasharray="1.5 1.5"/>
<defs><radialGradient id="vcs"><stop offset="0.45" stop-color="#c8c8c8" stop-opacity="0.7"/><stop offset="1" stop-color="#ffffff" stop-opacity="0"/></radialGradient></defs><ellipse cx="823.3" cy="757" rx="38.5" ry="21" fill="#f6f6f6" stroke="#dcdcdc"/><ellipse cx="823.3" cy="755.5" rx="29.5" ry="15.5" fill="#fff" stroke="#e2e2e2"/><ellipse cx="822" cy="758" rx="24" ry="11" fill="url(#vcs)"/>
<polygon points="802.5,726.4 823.7,717.4 843.8,727.3 821.0,735.7" fill="#f1f1f1" stroke="#8c8c8c" stroke-width="1" />
<polygon points="802.5,726.4 821.0,735.7 820.4,762.6 804.7,751.8" fill="#e4e4e4" stroke="#8c8c8c" stroke-width="1" />
<polygon points="821.0,735.7 843.8,727.3 842.0,752.5 820.4,762.6" fill="#d8d8d8" stroke="#8c8c8c" stroke-width="1" />
<text transform="matrix(0.92,-0.36,0,1,824,751)" font-size="5.5" fill="#8a8a8a" font-family="Liberation Sans, sans-serif" textLength="16">FRONT</text>
<text transform="matrix(0.8,0.45,0,1,806.5,738)" font-size="5" fill="#9a9a9a" font-family="Liberation Sans, sans-serif" textLength="11">LEFT</text>
<text transform="matrix(0.9,-0.3,0.7,0.35,815,729)" font-size="5" fill="#9a9a9a" font-family="Liberation Sans, sans-serif" textLength="9">TOP</text></g><g clip-path="url(#c3)"><path d="M993.5 612 V917" stroke="#9fcf9f" stroke-width="1" stroke-dasharray="9 9" stroke-dashoffset="0"/>
<path d="M1037.5 199 V1104" stroke="#9fcf9f" stroke-width="1" stroke-dasharray="9 9" stroke-dashoffset="0"/>
<path d="M1081.5 199 V1104" stroke="#9fcf9f" stroke-width="1" stroke-dasharray="9 9" stroke-dashoffset="0"/>
<path d="M1124.5 199 V1104" stroke="#9fcf9f" stroke-width="1" stroke-dasharray="9 9" stroke-dashoffset="0"/>
<path d="M1168.5 199 V1104" stroke="#9fcf9f" stroke-width="1" stroke-dasharray="9 9" stroke-dashoffset="0"/>
<path d="M1212.5 742 V1104" stroke="#9fcf9f" stroke-width="1" stroke-dasharray="9 9" stroke-dashoffset="3"/>
<path d="M1256.5 199 V1104" stroke="#9fcf9f" stroke-width="1" stroke-dasharray="9 9" stroke-dashoffset="0"/>
<path d="M1300.5 199 V1104" stroke="#9fcf9f" stroke-width="1" stroke-dasharray="9 9" stroke-dashoffset="0"/>
<path d="M1343.5 199 V1104" stroke="#9fcf9f" stroke-width="1" stroke-dasharray="9 9" stroke-dashoffset="0"/>
<path d="M1387.5 199 V1104" stroke="#9fcf9f" stroke-width="1" stroke-dasharray="9 9" stroke-dashoffset="0"/>
<path d="M1431.5 612 V974" stroke="#9fcf9f" stroke-width="1" stroke-dasharray="9 9" stroke-dashoffset="0"/>
<path d="M915 767.5 H1522" stroke="#9fcf9f" stroke-dasharray="9 9" stroke-dashoffset="4"/>
<polyline points="915.0,697.3 969.0,717.2 993.5,724.5 1037.7,734.5 1080.7,743.0 1124.3,748.8 1168.7,751.8 1212.4,753.5 1225.0,754.0 1303.6,748.4 1386.0,735.0 1431.6,724.0 1522.0,691.0" fill="none" stroke="#9c9c9c" stroke-width="1.5" />
<polyline points="915.0,711.0 969.0,730.4 993.5,737.5 1037.7,749.5 1080.7,757.5 1124.0,762.5 1168.7,765.5 1212.4,766.8 1256.0,765.8 1300.0,762.5 1343.5,757.0 1387.5,748.5 1431.6,737.0 1522.0,705.6" fill="none" stroke="#9c9c9c" stroke-width="1.5" />
<polyline points="993.5,730.8 1015.4,736.5 1037.3,741.6 1059.2,746.1 1081.1,750.0 1103.0,753.3 1124.9,756.0 1146.8,758.1 1168.7,759.6 1190.6,760.5 1212.5,760.8 1234.4,760.5 1256.3,759.6 1278.2,758.1 1300.1,756.0 1322.0,753.3 1343.9,750.0 1365.8,746.1 1387.7,741.6 1409.6,736.5 1431.5,730.8" fill="none" stroke="#b9b9b9" stroke-width="1" />
<polyline points="993.5,733.5 1015.4,739.2 1037.3,744.3 1059.2,748.8 1081.1,752.7 1103.0,756.0 1124.9,758.7 1146.8,760.8 1168.7,762.3 1190.6,763.2 1212.5,763.5 1234.4,763.2 1256.3,762.3 1278.2,760.8 1300.1,758.7 1322.0,756.0 1343.9,752.7 1365.8,748.8 1387.7,744.3 1409.6,739.2 1431.5,733.5" fill="none" stroke="#b0b0b0" stroke-width="1" />
<polyline points="993.5,735.2 1015.4,740.9 1037.3,746.0 1059.2,750.5 1081.1,754.4 1103.0,757.7 1124.9,760.4 1146.8,762.5 1168.7,764.0 1190.6,764.9 1212.5,765.2 1234.4,764.9 1256.3,764.0 1278.2,762.5 1300.1,760.4 1322.0,757.7 1343.9,754.4 1365.8,750.5 1387.7,746.0 1409.6,740.9 1431.5,735.2" fill="none" stroke="#b9b9b9" stroke-width="1" />
<polyline points="993.5,737.0 1015.4,742.7 1037.3,747.8 1059.2,752.3 1081.1,756.2 1103.0,759.5 1124.9,762.2 1146.8,764.3 1168.7,765.8 1190.6,766.7 1212.5,767.0 1234.4,766.7 1256.3,765.8 1278.2,764.3 1300.1,762.2 1322.0,759.5 1343.9,756.2 1365.8,752.3 1387.7,747.8 1409.6,742.7 1431.5,737.0" fill="none" stroke="#b0b0b0" stroke-width="1" />
<polyline points="993.5,731.0 1015.4,736.6 1037.3,741.6 1059.2,746.0 1081.1,749.9 1103.0,753.1 1124.9,755.8 1146.8,757.8 1168.7,759.3 1190.6,760.2 1212.5,760.5 1234.4,760.2 1256.3,759.3 1278.2,757.8 1300.1,755.8 1322.0,753.1 1343.9,749.9 1365.8,746.0 1387.7,741.6 1409.6,736.6 1431.5,731.0" fill="none" stroke="#7fae6a" stroke-width="0.9" />
<polyline points="966.0,773.3 993.5,731.0 993.5,731.0 1015.4,737.0 1037.3,742.3 1059.2,747.1 1081.1,751.2 1103.0,754.6 1124.9,757.5 1146.8,759.7 1168.7,761.2 1190.6,762.2 1212.5,762.5 1234.4,762.2 1256.3,761.2 1278.2,759.7 1300.1,757.5 1322.0,754.6 1343.9,751.2 1365.8,747.1 1387.7,742.3 1409.6,737.0 1431.5,731.0 1431.5,731.0 1451.0,773.3 966.0,773.3" fill="none" stroke="#fbb56c" stroke-width="1.2" />
<path d="M1037.5 734 V746 M1387.5 732 V744" stroke="#b4b4b4"/>
<path d="M993.5 725 V717.7 H1431.5" fill="none" stroke="#1746c4" stroke-width="1.6"/>
<path d="M993.5 726 V760" fill="none" stroke="#1746c4" stroke-width="1.5" stroke-dasharray="4.5 13 10 13"/><path d="M993 767.8 H1431.5" fill="none" stroke="#8eaae2" stroke-width="2"/><path d="M993 767.8 H1431.5" fill="none" stroke="#2453cf" stroke-width="2" stroke-dasharray="10 9"/><path d="M993.5 760 V768" stroke="#1746c4" stroke-width="1.5"/>
<path d="M1431.5 687 V770" stroke="#7da2f2" stroke-width="1.2"/>
<path d="M1212.5 687.7 H1431.5 M1212.5 684 V742" stroke="#7da2f2" stroke-width="1.1" fill="none"/>
<path d="M1209.5 690.5 L1215.5 684.5 M1428.5 690.5 L1434.5 684.5" stroke="#7da2f2" stroke-width="1"/>
<path d="M1212.5 742 L1257 698" stroke="#333" stroke-width="1.3"/>
<circle cx="1212.5" cy="697.5" r="3.2" fill="#78aaf0" stroke="#6e6e6e" stroke-width="0.9"/>
<circle cx="1431.5" cy="697.5" r="3.2" fill="#78aaf0" stroke="#6e6e6e" stroke-width="0.9"/>
<g transform="translate(1258,682)"><path d="M3 7 V4 Q3 0.8 6 0.8 Q9 0.8 9 4 V7" fill="none" stroke="#1746c4" stroke-width="1.2"/><path d="M4.8 7 V4.3 Q4.8 2.6 6 2.6 Q7.2 2.6 7.2 4.3 V7" fill="none" stroke="#1746c4" stroke-width="0.8"/><rect x="0.7" y="6.5" width="10.6" height="8.5" fill="#b4eae4" stroke="#1746c4" stroke-width="1.2"/></g>
<path d="M1315.5 693 V703 M1328.5 693 V703 M1315.5 697.2 H1328.5" stroke="#1746c4" stroke-width="1.3"/>
<path d="M966.7 739 V749 M979.3 739 V749 M966.7 742.6 H979.3" stroke="#1746c4" stroke-width="1.3"/>
<path d="M964 714 V769" stroke="#8fb0f6" stroke-width="2"/><path d="M959 717.5 H982 M959 767.5 H968" stroke="#8fb0f6" stroke-width="1.1"/><path d="M961 714.5 L964.5 718 M961 764.5 L964.5 768" stroke="#6f96ee" stroke-width="1"/>
<circle cx="968.5" cy="717.6" r="3.2" fill="#78aaf0" stroke="#6e6e6e" stroke-width="0.9"/>
<circle cx="968.5" cy="767.4" r="3.2" fill="#78aaf0" stroke="#6e6e6e" stroke-width="0.9"/></g></svg>
<span class="t" style="left:1305.0px;top:670.28px;font-size:10.5px;line-height:14.5px;color:#1746c4;letter-spacing:0.065px;">3.2504</span>
<div style="position:absolute;left:945.4px;top:759.3px;width:38px;height:16px;overflow:hidden;transform-origin:0 0;transform:rotate(-90deg);white-space:nowrap;font-size:14px;line-height:16px;color:#1746c4;letter-spacing:-0.15px;">0.7510</div>
<div style="position:absolute;left:1413.4px;top:759.3px;width:38px;height:16px;overflow:hidden;transform-origin:0 0;transform:rotate(-90deg);white-space:nowrap;font-size:14px;line-height:16px;color:#1746c4;letter-spacing:-0.15px;">0.7510</div>
<svg style="position:absolute;left:0px;top:0px;" width="1522" height="1104" viewBox="0 0 1522 1104"><defs><filter id="sh" x="-20%" y="-20%" width="150%" height="150%"><feDropShadow dx="2" dy="2" stdDeviation="1.2" flood-color="#14281e" flood-opacity="0.85"/></filter></defs>
<g filter="url(#sh)"><path d="M1144.3 548 L1101.5 690" stroke="#ff0000" stroke-width="8.5" stroke-linecap="round" fill="none"/><path d="M1095 703.5 L1089.5 685.5 L1110 692.5Z" fill="#ff0000" stroke="#ff0000" stroke-width="1.5" stroke-linejoin="round"/></g>
<g filter="url(#sh)"><path d="M966 906.5 L1010.5 797" stroke="#ff0000" stroke-width="8.5" stroke-linecap="round" fill="none"/><path d="M1016.3 782.5 L1000 794 L1019.5 801.5Z" fill="#ff0000" stroke="#ff0000" stroke-width="1.5" stroke-linejoin="round"/></g></svg>
<div style="position:absolute;left:1089px;top:473px;width:91px;height:72px;border:6px solid #ff0000;border-radius:10px;box-sizing:border-box;background:#fff;box-shadow:2px 2px 3px rgba(20,40,30,.85);"></div>
<span class="t" style="left:1107.6px;top:488.47px;font-size:17.5px;line-height:21.5px;color:#ff0000;letter-spacing:-0.999px;">MASS</span>
<div style="position:absolute;left:942.5px;top:917px;width:88.0px;height:62px;border:5.5px solid #ff0000;border-radius:10px;box-sizing:border-box;background:#fff;box-shadow:2px 2px 3px rgba(20,40,30,.85);"></div>
<span class="t" style="left:960.3px;top:932.80px;font-size:16.5px;line-height:20.5px;color:#ff0000;letter-spacing:0.165px;">VOID</span>
</div></body></html>
